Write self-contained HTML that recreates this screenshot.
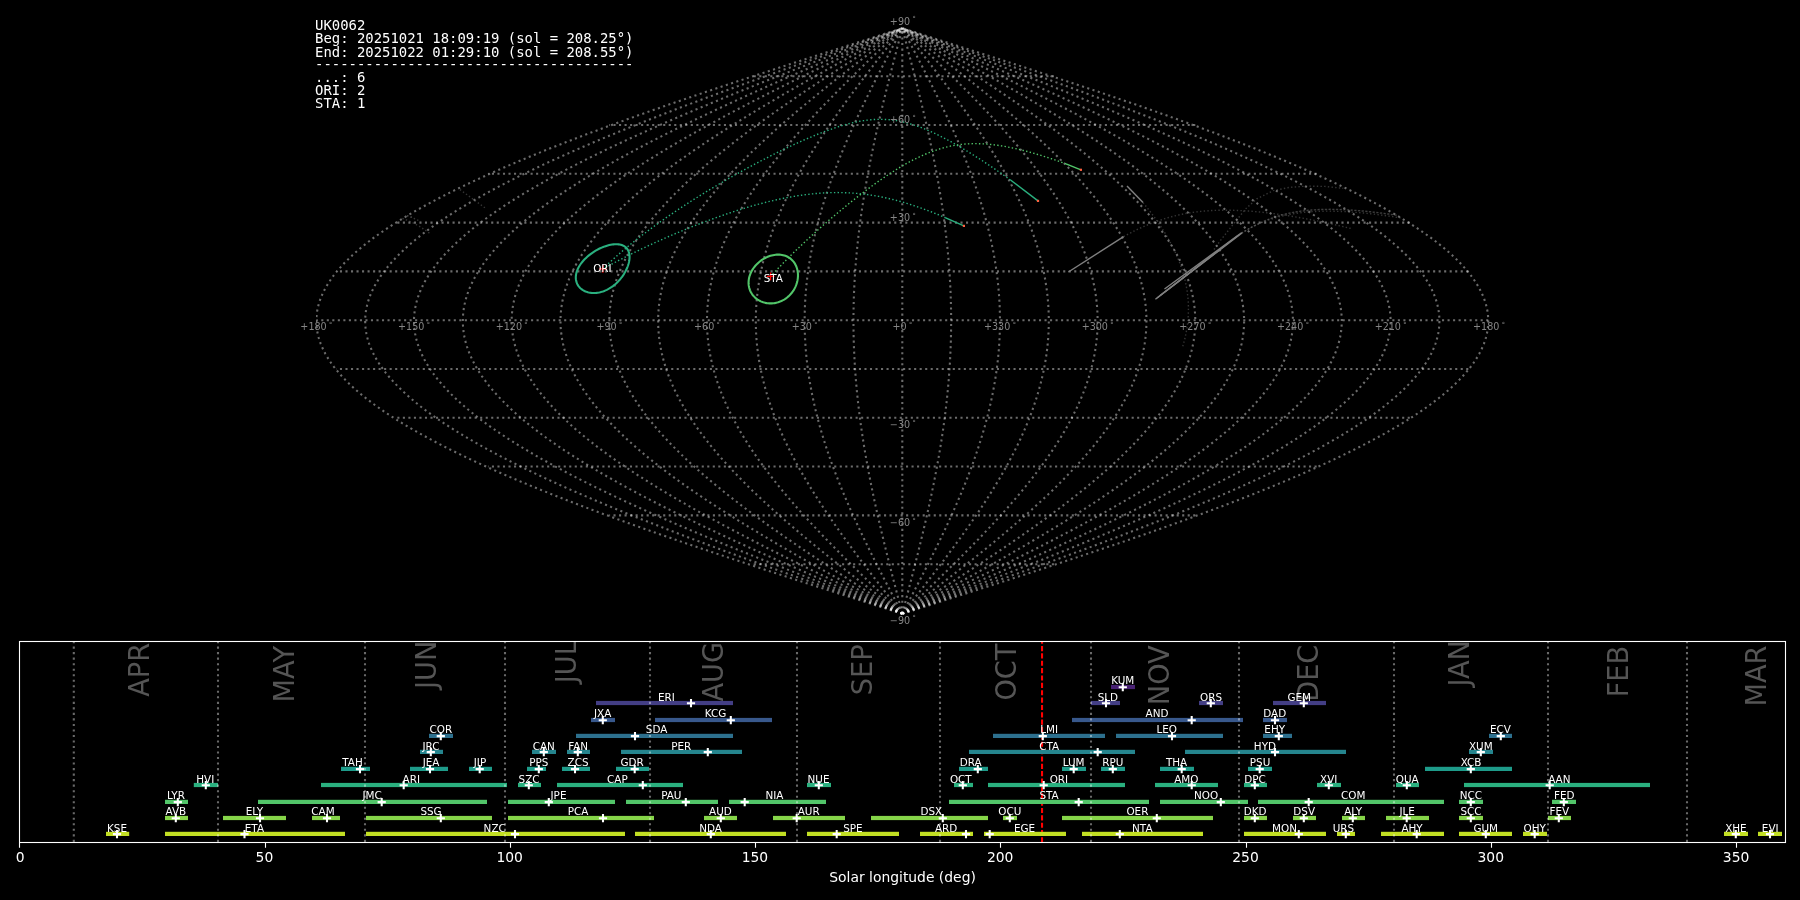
<!DOCTYPE html>
<html lang="en"><head><meta charset="utf-8"><title>UK0062 radiant map</title>
<style>html,body{margin:0;padding:0;background:#000;overflow:hidden}svg text{white-space:pre}</style>
</head><body>
<svg width="1800" height="900" viewBox="0 0 1800 900" style="display:block;background:#000;will-change:transform">
<clipPath id="mapclip"><rect x="316.05" y="0" width="1176" height="640"/></clipPath>
<g fill="none" stroke="#fff" stroke-opacity="0.42" stroke-width="2.083" stroke-dasharray="2.083 3.438" clip-path="url(#mapclip)">
<path d="M1053.96,564.17H750.64"/>
<path d="M1195.29,515.38H609.31"/>
<path d="M1316.64,466.58H487.96"/>
<path d="M1409.77,417.79H394.83"/>
<path d="M1468.31,369.00H336.29"/>
<path d="M1488.27,320.20H316.33"/>
<path d="M1468.31,271.40H336.29"/>
<path d="M1409.77,222.61H394.83"/>
<path d="M1316.64,173.81H487.96"/>
<path d="M1195.29,125.02H609.31"/>
<path d="M1053.96,76.22H750.64"/>
<path d="M902.30,613.77L912.53,610.52L922.75,607.26L932.97,604.01L943.18,600.76L953.37,597.50L963.55,594.25L973.71,591.00L983.85,587.75L993.97,584.49L1004.05,581.24L1014.11,577.99L1024.13,574.73L1034.12,571.48L1044.06,568.23L1053.96,564.97L1063.82,561.72L1073.62,558.47L1083.38,555.22L1093.07,551.96L1102.71,548.71L1112.29,545.46L1121.81,542.20L1131.26,538.95L1140.64,535.70L1149.94,532.44L1159.17,529.19L1168.33,525.94L1177.40,522.69L1186.38,519.43L1195.29,516.18L1204.10,512.93L1212.82,509.67L1221.44,506.42L1229.97,503.17L1238.40,499.92L1246.73,496.66L1254.95,493.41L1263.06,490.16L1271.06,486.90L1278.96,483.65L1286.73,480.40L1294.39,477.14L1301.93,473.89L1309.35,470.64L1316.64,467.38L1323.81,464.13L1330.85,460.88L1337.76,457.63L1344.54,454.37L1351.18,451.12L1357.69,447.87L1364.05,444.61L1370.28,441.36L1376.36,438.11L1382.30,434.86L1388.09,431.60L1393.74,428.35L1399.23,425.10L1404.58,421.84L1409.77,418.59L1414.80,415.34L1419.68,412.08L1424.40,408.83L1428.97,405.58L1433.37,402.32L1437.61,399.07L1441.69,395.82L1445.60,392.57L1449.35,389.31L1452.93,386.06L1456.35,382.81L1459.59,379.55L1462.67,376.30L1465.57,373.05L1468.31,369.80L1470.87,366.54L1473.25,363.29L1475.47,360.04L1477.51,356.78L1479.37,353.53L1481.06,350.28L1482.57,347.02L1483.90,343.77L1485.06,340.52L1486.04,337.26L1486.84,334.01L1487.47,330.76L1487.92,327.51L1488.18,324.25L1488.27,321.00L1488.18,317.75L1487.92,314.49L1487.47,311.24L1486.84,307.99L1486.04,304.74L1485.06,301.48L1483.90,298.23L1482.57,294.98L1481.06,291.72L1479.37,288.47L1477.51,285.22L1475.47,281.96L1473.25,278.71L1470.87,275.46L1468.31,272.20L1465.57,268.95L1462.67,265.70L1459.59,262.45L1456.35,259.19L1452.93,255.94L1449.35,252.69L1445.60,249.43L1441.69,246.18L1437.61,242.93L1433.37,239.68L1428.97,236.42L1424.40,233.17L1419.68,229.92L1414.80,226.66L1409.77,223.41L1404.58,220.16L1399.23,216.90L1393.74,213.65L1388.09,210.40L1382.30,207.14L1376.36,203.89L1370.28,200.64L1364.05,197.39L1357.69,194.13L1351.18,190.88L1344.54,187.63L1337.76,184.37L1330.85,181.12L1323.81,177.87L1316.64,174.62L1309.35,171.36L1301.93,168.11L1294.39,164.86L1286.73,161.60L1278.96,158.35L1271.06,155.10L1263.06,151.84L1254.95,148.59L1246.73,145.34L1238.40,142.08L1229.97,138.83L1221.44,135.58L1212.82,132.33L1204.10,129.07L1195.29,125.82L1186.38,122.57L1177.40,119.31L1168.33,116.06L1159.17,112.81L1149.94,109.55L1140.64,106.30L1131.26,103.05L1121.81,99.80L1112.29,96.54L1102.71,93.29L1093.07,90.04L1083.38,86.78L1073.62,83.53L1063.82,80.28L1053.96,77.02L1044.06,73.77L1034.12,70.52L1024.13,67.27L1014.11,64.01L1004.05,60.76L993.97,57.51L983.85,54.25L973.71,51.00L963.55,47.75L953.37,44.49L943.18,41.24L932.97,37.99L922.75,34.74L912.53,31.48L902.30,28.23"/>
<path d="M902.30,613.77L911.67,610.52L921.05,607.26L930.41,604.01L939.77,600.76L949.11,597.50L958.45,594.25L967.76,591.00L977.06,587.75L986.33,584.49L995.57,581.24L1004.79,577.99L1013.98,574.73L1023.13,571.48L1032.25,568.23L1041.32,564.97L1050.36,561.72L1059.34,558.47L1068.29,555.22L1077.18,551.96L1086.01,548.71L1094.79,545.46L1103.52,542.20L1112.18,538.95L1120.77,535.70L1129.31,532.44L1137.77,529.19L1146.16,525.94L1154.47,522.69L1162.71,519.43L1170.87,516.18L1178.95,512.93L1186.94,509.67L1194.85,506.42L1202.67,503.17L1210.39,499.92L1218.02,496.66L1225.56,493.41L1233.00,490.16L1240.33,486.90L1247.57,483.65L1254.70,480.40L1261.72,477.14L1268.63,473.89L1275.43,470.64L1282.12,467.38L1288.69,464.13L1295.14,460.88L1301.47,457.63L1307.69,454.37L1313.77,451.12L1319.74,447.87L1325.57,444.61L1331.28,441.36L1336.86,438.11L1342.30,434.86L1347.61,431.60L1352.78,428.35L1357.82,425.10L1362.72,421.84L1367.48,418.59L1372.09,415.34L1376.57,412.08L1380.90,408.83L1385.08,405.58L1389.12,402.32L1393.00,399.07L1396.74,395.82L1400.33,392.57L1403.76,389.31L1407.05,386.06L1410.18,382.81L1413.15,379.55L1415.97,376.30L1418.63,373.05L1421.14,369.80L1423.49,366.54L1425.67,363.29L1427.70,360.04L1429.57,356.78L1431.28,353.53L1432.83,350.28L1434.21,347.02L1435.44,343.77L1436.50,340.52L1437.40,337.26L1438.13,334.01L1438.70,330.76L1439.11,327.51L1439.36,324.25L1439.44,321.00L1439.36,317.75L1439.11,314.49L1438.70,311.24L1438.13,307.99L1437.40,304.74L1436.50,301.48L1435.44,298.23L1434.21,294.98L1432.83,291.72L1431.28,288.47L1429.57,285.22L1427.70,281.96L1425.67,278.71L1423.49,275.46L1421.14,272.20L1418.63,268.95L1415.97,265.70L1413.15,262.45L1410.18,259.19L1407.05,255.94L1403.76,252.69L1400.33,249.43L1396.74,246.18L1393.00,242.93L1389.12,239.68L1385.08,236.42L1380.90,233.17L1376.57,229.92L1372.09,226.66L1367.48,223.41L1362.72,220.16L1357.82,216.90L1352.78,213.65L1347.61,210.40L1342.30,207.14L1336.86,203.89L1331.28,200.64L1325.57,197.39L1319.74,194.13L1313.77,190.88L1307.69,187.63L1301.47,184.37L1295.14,181.12L1288.69,177.87L1282.12,174.62L1275.43,171.36L1268.63,168.11L1261.72,164.86L1254.70,161.60L1247.57,158.35L1240.33,155.10L1233.00,151.84L1225.56,148.59L1218.02,145.34L1210.39,142.08L1202.67,138.83L1194.85,135.58L1186.94,132.33L1178.95,129.07L1170.87,125.82L1162.71,122.57L1154.47,119.31L1146.16,116.06L1137.77,112.81L1129.31,109.55L1120.77,106.30L1112.18,103.05L1103.52,99.80L1094.79,96.54L1086.01,93.29L1077.18,90.04L1068.29,86.78L1059.34,83.53L1050.36,80.28L1041.32,77.02L1032.25,73.77L1023.13,70.52L1013.98,67.27L1004.79,64.01L995.57,60.76L986.33,57.51L977.06,54.25L967.76,51.00L958.45,47.75L949.11,44.49L939.77,41.24L930.41,37.99L921.05,34.74L911.67,31.48L902.30,28.23"/>
<path d="M902.30,613.77L910.82,610.52L919.34,607.26L927.86,604.01L936.36,600.76L944.86,597.50L953.34,594.25L961.81,591.00L970.26,587.75L978.69,584.49L987.09,581.24L995.47,577.99L1003.83,574.73L1012.15,571.48L1020.43,568.23L1028.68,564.97L1036.90,561.72L1045.07,558.47L1053.20,555.22L1061.28,551.96L1069.31,548.71L1077.29,545.46L1085.22,542.20L1093.10,538.95L1100.91,535.70L1108.67,532.44L1116.36,529.19L1123.99,525.94L1131.55,522.69L1139.04,519.43L1146.45,516.18L1153.80,512.93L1161.06,509.67L1168.25,506.42L1175.36,503.17L1182.38,499.92L1189.32,496.66L1196.17,493.41L1202.93,490.16L1209.60,486.90L1216.18,483.65L1222.66,480.40L1229.04,477.14L1235.33,473.89L1241.51,470.64L1247.59,467.38L1253.56,464.13L1259.43,460.88L1265.19,457.63L1270.83,454.37L1276.37,451.12L1281.79,447.87L1287.09,444.61L1292.28,441.36L1297.35,438.11L1302.30,434.86L1307.13,431.60L1311.83,428.35L1316.41,425.10L1320.86,421.84L1325.19,418.59L1329.39,415.34L1333.45,412.08L1337.39,408.83L1341.19,405.58L1344.86,402.32L1348.39,399.07L1351.79,395.82L1355.05,392.57L1358.18,389.31L1361.16,386.06L1364.01,382.81L1366.71,379.55L1369.27,376.30L1371.69,373.05L1373.97,369.80L1376.11,366.54L1378.09,363.29L1379.94,360.04L1381.64,356.78L1383.19,353.53L1384.60,350.28L1385.86,347.02L1386.97,343.77L1387.93,340.52L1388.75,337.26L1389.42,334.01L1389.94,330.76L1390.31,327.51L1390.54,324.25L1390.61,321.00L1390.54,317.75L1390.31,314.49L1389.94,311.24L1389.42,307.99L1388.75,304.74L1387.93,301.48L1386.97,298.23L1385.86,294.98L1384.60,291.72L1383.19,288.47L1381.64,285.22L1379.94,281.96L1378.09,278.71L1376.11,275.46L1373.97,272.20L1371.69,268.95L1369.27,265.70L1366.71,262.45L1364.01,259.19L1361.16,255.94L1358.18,252.69L1355.05,249.43L1351.79,246.18L1348.39,242.93L1344.86,239.68L1341.19,236.42L1337.39,233.17L1333.45,229.92L1329.39,226.66L1325.19,223.41L1320.86,220.16L1316.41,216.90L1311.83,213.65L1307.13,210.40L1302.30,207.14L1297.35,203.89L1292.28,200.64L1287.09,197.39L1281.79,194.13L1276.37,190.88L1270.83,187.63L1265.19,184.37L1259.43,181.12L1253.56,177.87L1247.59,174.62L1241.51,171.36L1235.33,168.11L1229.04,164.86L1222.66,161.60L1216.18,158.35L1209.60,155.10L1202.93,151.84L1196.17,148.59L1189.32,145.34L1182.38,142.08L1175.36,138.83L1168.25,135.58L1161.06,132.33L1153.80,129.07L1146.45,125.82L1139.04,122.57L1131.55,119.31L1123.99,116.06L1116.36,112.81L1108.67,109.55L1100.91,106.30L1093.10,103.05L1085.22,99.80L1077.29,96.54L1069.31,93.29L1061.28,90.04L1053.20,86.78L1045.07,83.53L1036.90,80.28L1028.68,77.02L1020.43,73.77L1012.15,70.52L1003.83,67.27L995.47,64.01L987.09,60.76L978.69,57.51L970.26,54.25L961.81,51.00L953.34,47.75L944.86,44.49L936.36,41.24L927.86,37.99L919.34,34.74L910.82,31.48L902.30,28.23"/>
<path d="M902.30,613.77L909.97,610.52L917.64,607.26L925.30,604.01L932.96,600.76L940.60,597.50L948.24,594.25L955.86,591.00L963.46,587.75L971.05,584.49L978.61,581.24L986.16,577.99L993.67,574.73L1001.16,571.48L1008.62,568.23L1016.05,564.97L1023.44,561.72L1030.79,558.47L1038.11,555.22L1045.38,551.96L1052.61,548.71L1059.80,545.46L1066.93,542.20L1074.02,538.95L1081.05,535.70L1088.03,532.44L1094.95,529.19L1101.82,525.94L1108.62,522.69L1115.36,519.43L1122.04,516.18L1128.65,512.93L1135.19,509.67L1141.66,506.42L1148.05,503.17L1154.37,499.92L1160.62,496.66L1166.79,493.41L1172.87,490.16L1178.87,486.90L1184.79,483.65L1190.62,480.40L1196.37,477.14L1202.02,473.89L1207.59,470.64L1213.06,467.38L1218.43,464.13L1223.71,460.88L1228.90,457.63L1233.98,454.37L1238.96,451.12L1243.84,447.87L1248.61,444.61L1253.28,441.36L1257.85,438.11L1262.30,434.86L1266.64,431.60L1270.88,428.35L1275.00,425.10L1279.01,421.84L1282.90,418.59L1286.68,415.34L1290.34,412.08L1293.88,408.83L1297.30,405.58L1300.60,402.32L1303.78,399.07L1306.84,395.82L1309.78,392.57L1312.59,389.31L1315.28,386.06L1317.84,382.81L1320.27,379.55L1322.58,376.30L1324.75,373.05L1326.80,369.80L1328.72,366.54L1330.52,363.29L1332.18,360.04L1333.70,356.78L1335.10,353.53L1336.37,350.28L1337.50,347.02L1338.50,343.77L1339.37,340.52L1340.11,337.26L1340.71,334.01L1341.18,330.76L1341.51,327.51L1341.71,324.25L1341.78,321.00L1341.71,317.75L1341.51,314.49L1341.18,311.24L1340.71,307.99L1340.11,304.74L1339.37,301.48L1338.50,298.23L1337.50,294.98L1336.37,291.72L1335.10,288.47L1333.70,285.22L1332.18,281.96L1330.52,278.71L1328.72,275.46L1326.80,272.20L1324.75,268.95L1322.58,265.70L1320.27,262.45L1317.84,259.19L1315.28,255.94L1312.59,252.69L1309.78,249.43L1306.84,246.18L1303.78,242.93L1300.60,239.68L1297.30,236.42L1293.88,233.17L1290.34,229.92L1286.68,226.66L1282.90,223.41L1279.01,220.16L1275.00,216.90L1270.88,213.65L1266.64,210.40L1262.30,207.14L1257.85,203.89L1253.28,200.64L1248.61,197.39L1243.84,194.13L1238.96,190.88L1233.98,187.63L1228.90,184.37L1223.71,181.12L1218.43,177.87L1213.06,174.62L1207.59,171.36L1202.02,168.11L1196.37,164.86L1190.62,161.60L1184.79,158.35L1178.87,155.10L1172.87,151.84L1166.79,148.59L1160.62,145.34L1154.37,142.08L1148.05,138.83L1141.66,135.58L1135.19,132.33L1128.65,129.07L1122.04,125.82L1115.36,122.57L1108.62,119.31L1101.82,116.06L1094.95,112.81L1088.03,109.55L1081.05,106.30L1074.02,103.05L1066.93,99.80L1059.80,96.54L1052.61,93.29L1045.38,90.04L1038.11,86.78L1030.79,83.53L1023.44,80.28L1016.05,77.02L1008.62,73.77L1001.16,70.52L993.67,67.27L986.16,64.01L978.61,60.76L971.05,57.51L963.46,54.25L955.86,51.00L948.24,47.75L940.60,44.49L932.96,41.24L925.30,37.99L917.64,34.74L909.97,31.48L902.30,28.23"/>
<path d="M902.30,613.77L909.12,610.52L915.93,607.26L922.74,604.01L929.55,600.76L936.35,597.50L943.13,594.25L949.91,591.00L956.67,587.75L963.41,584.49L970.14,581.24L976.84,577.99L983.52,574.73L990.18,571.48L996.81,568.23L1003.41,564.97L1009.98,561.72L1016.51,558.47L1023.02,555.22L1029.48,551.96L1035.91,548.71L1042.30,545.46L1048.64,542.20L1054.94,538.95L1061.19,535.70L1067.39,532.44L1073.55,529.19L1079.65,525.94L1085.70,522.69L1091.69,519.43L1097.62,516.18L1103.50,512.93L1109.31,509.67L1115.06,506.42L1120.75,503.17L1126.37,499.92L1131.92,496.66L1137.40,493.41L1142.81,490.16L1148.14,486.90L1153.40,483.65L1158.59,480.40L1163.69,477.14L1168.72,473.89L1173.67,470.64L1178.53,467.38L1183.31,464.13L1188.00,460.88L1192.61,457.63L1197.13,454.37L1201.55,451.12L1205.89,447.87L1210.13,444.61L1214.29,441.36L1218.34,438.11L1222.30,434.86L1226.16,431.60L1229.92,428.35L1233.59,425.10L1237.15,421.84L1240.61,418.59L1243.97,415.34L1247.22,412.08L1250.37,408.83L1253.41,405.58L1256.35,402.32L1259.17,399.07L1261.89,395.82L1264.50,392.57L1267.00,389.31L1269.39,386.06L1271.66,382.81L1273.83,379.55L1275.88,376.30L1277.81,373.05L1279.64,369.80L1281.34,366.54L1282.94,363.29L1284.41,360.04L1285.77,356.78L1287.01,353.53L1288.14,350.28L1289.15,347.02L1290.04,343.77L1290.81,340.52L1291.46,337.26L1292.00,334.01L1292.41,330.76L1292.71,327.51L1292.89,324.25L1292.95,321.00L1292.89,317.75L1292.71,314.49L1292.41,311.24L1292.00,307.99L1291.46,304.74L1290.81,301.48L1290.04,298.23L1289.15,294.98L1288.14,291.72L1287.01,288.47L1285.77,285.22L1284.41,281.96L1282.94,278.71L1281.34,275.46L1279.64,272.20L1277.81,268.95L1275.88,265.70L1273.83,262.45L1271.66,259.19L1269.39,255.94L1267.00,252.69L1264.50,249.43L1261.89,246.18L1259.17,242.93L1256.35,239.68L1253.41,236.42L1250.37,233.17L1247.22,229.92L1243.97,226.66L1240.61,223.41L1237.15,220.16L1233.59,216.90L1229.92,213.65L1226.16,210.40L1222.30,207.14L1218.34,203.89L1214.29,200.64L1210.13,197.39L1205.89,194.13L1201.55,190.88L1197.13,187.63L1192.61,184.37L1188.00,181.12L1183.31,177.87L1178.53,174.62L1173.67,171.36L1168.72,168.11L1163.69,164.86L1158.59,161.60L1153.40,158.35L1148.14,155.10L1142.81,151.84L1137.40,148.59L1131.92,145.34L1126.37,142.08L1120.75,138.83L1115.06,135.58L1109.31,132.33L1103.50,129.07L1097.62,125.82L1091.69,122.57L1085.70,119.31L1079.65,116.06L1073.55,112.81L1067.39,109.55L1061.19,106.30L1054.94,103.05L1048.64,99.80L1042.30,96.54L1035.91,93.29L1029.48,90.04L1023.02,86.78L1016.51,83.53L1009.98,80.28L1003.41,77.02L996.81,73.77L990.18,70.52L983.52,67.27L976.84,64.01L970.14,60.76L963.41,57.51L956.67,54.25L949.91,51.00L943.13,47.75L936.35,44.49L929.55,41.24L922.74,37.99L915.93,34.74L909.12,31.48L902.30,28.23"/>
<path d="M902.30,613.77L908.27,610.52L914.23,607.26L920.19,604.01L926.14,600.76L932.09,597.50L938.03,594.25L943.96,591.00L949.87,587.75L955.77,584.49L961.66,581.24L967.52,577.99L973.37,574.73L979.19,571.48L984.99,568.23L990.77,564.97L996.52,561.72L1002.24,558.47L1007.93,555.22L1013.58,551.96L1019.21,548.71L1024.80,545.46L1030.35,542.20L1035.86,538.95L1041.33,535.70L1046.76,532.44L1052.14,529.19L1057.48,525.94L1062.77,522.69L1068.02,519.43L1073.21,516.18L1078.35,512.93L1083.44,509.67L1088.47,506.42L1093.44,503.17L1098.36,499.92L1103.21,496.66L1108.01,493.41L1112.74,490.16L1117.41,486.90L1122.02,483.65L1126.55,480.40L1131.02,477.14L1135.42,473.89L1139.75,470.64L1144.00,467.38L1148.18,464.13L1152.29,460.88L1156.32,457.63L1160.27,454.37L1164.15,451.12L1167.94,447.87L1171.66,444.61L1175.29,441.36L1178.84,438.11L1182.30,434.86L1185.68,431.60L1188.97,428.35L1192.18,425.10L1195.29,421.84L1198.32,418.59L1201.26,415.34L1204.11,412.08L1206.86,408.83L1209.52,405.58L1212.09,402.32L1214.57,399.07L1216.94,395.82L1219.23,392.57L1221.41,389.31L1223.50,386.06L1225.49,382.81L1227.39,379.55L1229.18,376.30L1230.88,373.05L1232.47,369.80L1233.96,366.54L1235.36,363.29L1236.65,360.04L1237.84,356.78L1238.92,353.53L1239.91,350.28L1240.79,347.02L1241.57,343.77L1242.24,340.52L1242.82,337.26L1243.28,334.01L1243.65,330.76L1243.91,327.51L1244.06,324.25L1244.12,321.00L1244.06,317.75L1243.91,314.49L1243.65,311.24L1243.28,307.99L1242.82,304.74L1242.24,301.48L1241.57,298.23L1240.79,294.98L1239.91,291.72L1238.92,288.47L1237.84,285.22L1236.65,281.96L1235.36,278.71L1233.96,275.46L1232.47,272.20L1230.88,268.95L1229.18,265.70L1227.39,262.45L1225.49,259.19L1223.50,255.94L1221.41,252.69L1219.23,249.43L1216.94,246.18L1214.57,242.93L1212.09,239.68L1209.52,236.42L1206.86,233.17L1204.11,229.92L1201.26,226.66L1198.32,223.41L1195.29,220.16L1192.18,216.90L1188.97,213.65L1185.68,210.40L1182.30,207.14L1178.84,203.89L1175.29,200.64L1171.66,197.39L1167.94,194.13L1164.15,190.88L1160.27,187.63L1156.32,184.37L1152.29,181.12L1148.18,177.87L1144.00,174.62L1139.75,171.36L1135.42,168.11L1131.02,164.86L1126.55,161.60L1122.02,158.35L1117.41,155.10L1112.74,151.84L1108.01,148.59L1103.21,145.34L1098.36,142.08L1093.44,138.83L1088.47,135.58L1083.44,132.33L1078.35,129.07L1073.21,125.82L1068.02,122.57L1062.77,119.31L1057.48,116.06L1052.14,112.81L1046.76,109.55L1041.33,106.30L1035.86,103.05L1030.35,99.80L1024.80,96.54L1019.21,93.29L1013.58,90.04L1007.93,86.78L1002.24,83.53L996.52,80.28L990.77,77.02L984.99,73.77L979.19,70.52L973.37,67.27L967.52,64.01L961.66,60.76L955.77,57.51L949.87,54.25L943.96,51.00L938.03,47.75L932.09,44.49L926.14,41.24L920.19,37.99L914.23,34.74L908.27,31.48L902.30,28.23"/>
<path d="M902.30,613.77L907.41,610.52L912.53,607.26L917.63,604.01L922.74,600.76L927.84,597.50L932.93,594.25L938.01,591.00L943.08,587.75L948.13,584.49L953.18,581.24L958.20,577.99L963.22,574.73L968.21,571.48L973.18,568.23L978.13,564.97L983.06,561.72L987.96,558.47L992.84,555.22L997.69,551.96L1002.51,548.71L1007.30,545.46L1012.05,542.20L1016.78,538.95L1021.47,535.70L1026.12,532.44L1030.74,529.19L1035.31,525.94L1039.85,522.69L1044.34,519.43L1048.79,516.18L1053.20,512.93L1057.56,509.67L1061.87,506.42L1066.14,503.17L1070.35,499.92L1074.51,496.66L1078.62,493.41L1082.68,490.16L1086.68,486.90L1090.63,483.65L1094.52,480.40L1098.35,477.14L1102.12,473.89L1105.83,470.64L1109.47,467.38L1113.06,464.13L1116.58,460.88L1120.03,457.63L1123.42,454.37L1126.74,451.12L1129.99,447.87L1133.18,444.61L1136.29,441.36L1139.33,438.11L1142.30,434.86L1145.20,431.60L1148.02,428.35L1150.77,425.10L1153.44,421.84L1156.03,418.59L1158.55,415.34L1160.99,412.08L1163.35,408.83L1165.63,405.58L1167.84,402.32L1169.96,399.07L1172.00,395.82L1173.95,392.57L1175.83,389.31L1177.62,386.06L1179.32,382.81L1180.95,379.55L1182.48,376.30L1183.94,373.05L1185.30,369.80L1186.58,366.54L1187.78,363.29L1188.88,360.04L1189.90,356.78L1190.83,353.53L1191.68,350.28L1192.43,347.02L1193.10,343.77L1193.68,340.52L1194.17,337.26L1194.57,334.01L1194.88,330.76L1195.11,327.51L1195.24,324.25L1195.29,321.00L1195.24,317.75L1195.11,314.49L1194.88,311.24L1194.57,307.99L1194.17,304.74L1193.68,301.48L1193.10,298.23L1192.43,294.98L1191.68,291.72L1190.83,288.47L1189.90,285.22L1188.88,281.96L1187.78,278.71L1186.58,275.46L1185.30,272.20L1183.94,268.95L1182.48,265.70L1180.95,262.45L1179.32,259.19L1177.62,255.94L1175.83,252.69L1173.95,249.43L1172.00,246.18L1169.96,242.93L1167.84,239.68L1165.63,236.42L1163.35,233.17L1160.99,229.92L1158.55,226.66L1156.03,223.41L1153.44,220.16L1150.77,216.90L1148.02,213.65L1145.20,210.40L1142.30,207.14L1139.33,203.89L1136.29,200.64L1133.18,197.39L1129.99,194.13L1126.74,190.88L1123.42,187.63L1120.03,184.37L1116.58,181.12L1113.06,177.87L1109.47,174.62L1105.83,171.36L1102.12,168.11L1098.35,164.86L1094.52,161.60L1090.63,158.35L1086.68,155.10L1082.68,151.84L1078.62,148.59L1074.51,145.34L1070.35,142.08L1066.14,138.83L1061.87,135.58L1057.56,132.33L1053.20,129.07L1048.79,125.82L1044.34,122.57L1039.85,119.31L1035.31,116.06L1030.74,112.81L1026.12,109.55L1021.47,106.30L1016.78,103.05L1012.05,99.80L1007.30,96.54L1002.51,93.29L997.69,90.04L992.84,86.78L987.96,83.53L983.06,80.28L978.13,77.02L973.18,73.77L968.21,70.52L963.22,67.27L958.20,64.01L953.18,60.76L948.13,57.51L943.08,54.25L938.01,51.00L932.93,47.75L927.84,44.49L922.74,41.24L917.63,37.99L912.53,34.74L907.41,31.48L902.30,28.23"/>
<path d="M902.30,613.77L906.56,610.52L910.82,607.26L915.08,604.01L919.33,600.76L923.58,597.50L927.82,594.25L932.06,591.00L936.28,587.75L940.49,584.49L944.70,581.24L948.89,577.99L953.06,574.73L957.22,571.48L961.37,568.23L965.49,564.97L969.60,561.72L973.68,558.47L977.75,555.22L981.79,551.96L985.81,548.71L989.80,545.46L993.76,542.20L997.70,538.95L1001.61,535.70L1005.48,532.44L1009.33,529.19L1013.14,525.94L1016.92,522.69L1020.67,519.43L1024.38,516.18L1028.05,512.93L1031.68,509.67L1035.28,506.42L1038.83,503.17L1042.34,499.92L1045.81,496.66L1049.24,493.41L1052.62,490.16L1055.95,486.90L1059.24,483.65L1062.48,480.40L1065.67,477.14L1068.81,473.89L1071.90,470.64L1074.94,467.38L1077.93,464.13L1080.86,460.88L1083.74,457.63L1086.57,454.37L1089.33,451.12L1092.04,447.87L1094.70,444.61L1097.29,441.36L1099.83,438.11L1102.30,434.86L1104.71,431.60L1107.07,428.35L1109.36,425.10L1111.58,421.84L1113.74,418.59L1115.84,415.34L1117.88,412.08L1119.84,408.83L1121.75,405.58L1123.58,402.32L1125.35,399.07L1127.05,395.82L1128.68,392.57L1130.24,389.31L1131.73,386.06L1133.15,382.81L1134.51,379.55L1135.79,376.30L1137.00,373.05L1138.14,369.80L1139.20,366.54L1140.20,363.29L1141.12,360.04L1141.97,356.78L1142.75,353.53L1143.45,350.28L1144.08,347.02L1144.64,343.77L1145.12,340.52L1145.53,337.26L1145.86,334.01L1146.12,330.76L1146.31,327.51L1146.42,324.25L1146.45,321.00L1146.42,317.75L1146.31,314.49L1146.12,311.24L1145.86,307.99L1145.53,304.74L1145.12,301.48L1144.64,298.23L1144.08,294.98L1143.45,291.72L1142.75,288.47L1141.97,285.22L1141.12,281.96L1140.20,278.71L1139.20,275.46L1138.14,272.20L1137.00,268.95L1135.79,265.70L1134.51,262.45L1133.15,259.19L1131.73,255.94L1130.24,252.69L1128.68,249.43L1127.05,246.18L1125.35,242.93L1123.58,239.68L1121.75,236.42L1119.84,233.17L1117.88,229.92L1115.84,226.66L1113.74,223.41L1111.58,220.16L1109.36,216.90L1107.07,213.65L1104.71,210.40L1102.30,207.14L1099.83,203.89L1097.29,200.64L1094.70,197.39L1092.04,194.13L1089.33,190.88L1086.57,187.63L1083.74,184.37L1080.86,181.12L1077.93,177.87L1074.94,174.62L1071.90,171.36L1068.81,168.11L1065.67,164.86L1062.48,161.60L1059.24,158.35L1055.95,155.10L1052.62,151.84L1049.24,148.59L1045.81,145.34L1042.34,142.08L1038.83,138.83L1035.28,135.58L1031.68,132.33L1028.05,129.07L1024.38,125.82L1020.67,122.57L1016.92,119.31L1013.14,116.06L1009.33,112.81L1005.48,109.55L1001.61,106.30L997.70,103.05L993.76,99.80L989.80,96.54L985.81,93.29L981.79,90.04L977.75,86.78L973.68,83.53L969.60,80.28L965.49,77.02L961.37,73.77L957.22,70.52L953.06,67.27L948.89,64.01L944.70,60.76L940.49,57.51L936.28,54.25L932.06,51.00L927.82,47.75L923.58,44.49L919.33,41.24L915.08,37.99L910.82,34.74L906.56,31.48L902.30,28.23"/>
<path d="M902.30,613.77L905.71,610.52L909.12,607.26L912.52,604.01L915.93,600.76L919.32,597.50L922.72,594.25L926.10,591.00L929.48,587.75L932.86,584.49L936.22,581.24L939.57,577.99L942.91,574.73L946.24,571.48L949.55,568.23L952.85,564.97L956.14,561.72L959.41,558.47L962.66,555.22L965.89,551.96L969.10,548.71L972.30,545.46L975.47,542.20L978.62,538.95L981.75,535.70L984.85,532.44L987.92,529.19L990.98,525.94L994.00,522.69L996.99,519.43L999.96,516.18L1002.90,512.93L1005.81,509.67L1008.68,506.42L1011.52,503.17L1014.33,499.92L1017.11,496.66L1019.85,493.41L1022.55,490.16L1025.22,486.90L1027.85,483.65L1030.44,480.40L1033.00,477.14L1035.51,473.89L1037.98,470.64L1040.41,467.38L1042.80,464.13L1045.15,460.88L1047.45,457.63L1049.71,454.37L1051.93,451.12L1054.10,447.87L1056.22,444.61L1058.29,441.36L1060.32,438.11L1062.30,434.86L1064.23,431.60L1066.11,428.35L1067.94,425.10L1069.73,421.84L1071.46,418.59L1073.13,415.34L1074.76,412.08L1076.33,408.83L1077.86,405.58L1079.32,402.32L1080.74,399.07L1082.10,395.82L1083.40,392.57L1084.65,389.31L1085.84,386.06L1086.98,382.81L1088.06,379.55L1089.09,376.30L1090.06,373.05L1090.97,369.80L1091.82,366.54L1092.62,363.29L1093.36,360.04L1094.04,356.78L1094.66,353.53L1095.22,350.28L1095.72,347.02L1096.17,343.77L1096.55,340.52L1096.88,337.26L1097.15,334.01L1097.36,330.76L1097.51,327.51L1097.59,324.25L1097.62,321.00L1097.59,317.75L1097.51,314.49L1097.36,311.24L1097.15,307.99L1096.88,304.74L1096.55,301.48L1096.17,298.23L1095.72,294.98L1095.22,291.72L1094.66,288.47L1094.04,285.22L1093.36,281.96L1092.62,278.71L1091.82,275.46L1090.97,272.20L1090.06,268.95L1089.09,265.70L1088.06,262.45L1086.98,259.19L1085.84,255.94L1084.65,252.69L1083.40,249.43L1082.10,246.18L1080.74,242.93L1079.32,239.68L1077.86,236.42L1076.33,233.17L1074.76,229.92L1073.13,226.66L1071.46,223.41L1069.73,220.16L1067.94,216.90L1066.11,213.65L1064.23,210.40L1062.30,207.14L1060.32,203.89L1058.29,200.64L1056.22,197.39L1054.10,194.13L1051.93,190.88L1049.71,187.63L1047.45,184.37L1045.15,181.12L1042.80,177.87L1040.41,174.62L1037.98,171.36L1035.51,168.11L1033.00,164.86L1030.44,161.60L1027.85,158.35L1025.22,155.10L1022.55,151.84L1019.85,148.59L1017.11,145.34L1014.33,142.08L1011.52,138.83L1008.68,135.58L1005.81,132.33L1002.90,129.07L999.96,125.82L996.99,122.57L994.00,119.31L990.98,116.06L987.92,112.81L984.85,109.55L981.75,106.30L978.62,103.05L975.47,99.80L972.30,96.54L969.10,93.29L965.89,90.04L962.66,86.78L959.41,83.53L956.14,80.28L952.85,77.02L949.55,73.77L946.24,70.52L942.91,67.27L939.57,64.01L936.22,60.76L932.86,57.51L929.48,54.25L926.10,51.00L922.72,47.75L919.32,44.49L915.93,41.24L912.52,37.99L909.12,34.74L905.71,31.48L902.30,28.23"/>
<path d="M902.30,613.77L904.86,610.52L907.41,607.26L909.97,604.01L912.52,600.76L915.07,597.50L917.61,594.25L920.15,591.00L922.69,587.75L925.22,584.49L927.74,581.24L930.25,577.99L932.76,574.73L935.25,571.48L937.74,568.23L940.22,564.97L942.68,561.72L945.13,558.47L947.57,555.22L949.99,551.96L952.40,548.71L954.80,545.46L957.18,542.20L959.54,538.95L961.88,535.70L964.21,532.44L966.52,529.19L968.81,525.94L971.07,522.69L973.32,519.43L975.55,516.18L977.75,512.93L979.93,509.67L982.09,506.42L984.22,503.17L986.32,499.92L988.41,496.66L990.46,493.41L992.49,490.16L994.49,486.90L996.46,483.65L998.41,480.40L1000.32,477.14L1002.21,473.89L1004.06,470.64L1005.89,467.38L1007.68,464.13L1009.44,460.88L1011.17,457.63L1012.86,454.37L1014.52,451.12L1016.15,447.87L1017.74,444.61L1019.29,441.36L1020.82,438.11L1022.30,434.86L1023.75,431.60L1025.16,428.35L1026.53,425.10L1027.87,421.84L1029.17,418.59L1030.43,415.34L1031.65,412.08L1032.83,408.83L1033.97,405.58L1035.07,402.32L1036.13,399.07L1037.15,395.82L1038.13,392.57L1039.06,389.31L1039.96,386.06L1040.81,382.81L1041.62,379.55L1042.39,376.30L1043.12,373.05L1043.80,369.80L1044.44,366.54L1045.04,363.29L1045.59,360.04L1046.10,356.78L1046.57,353.53L1046.99,350.28L1047.37,347.02L1047.70,343.77L1047.99,340.52L1048.24,337.26L1048.44,334.01L1048.59,330.76L1048.70,327.51L1048.77,324.25L1048.79,321.00L1048.77,317.75L1048.70,314.49L1048.59,311.24L1048.44,307.99L1048.24,304.74L1047.99,301.48L1047.70,298.23L1047.37,294.98L1046.99,291.72L1046.57,288.47L1046.10,285.22L1045.59,281.96L1045.04,278.71L1044.44,275.46L1043.80,272.20L1043.12,268.95L1042.39,265.70L1041.62,262.45L1040.81,259.19L1039.96,255.94L1039.06,252.69L1038.13,249.43L1037.15,246.18L1036.13,242.93L1035.07,239.68L1033.97,236.42L1032.83,233.17L1031.65,229.92L1030.43,226.66L1029.17,223.41L1027.87,220.16L1026.53,216.90L1025.16,213.65L1023.75,210.40L1022.30,207.14L1020.82,203.89L1019.29,200.64L1017.74,197.39L1016.15,194.13L1014.52,190.88L1012.86,187.63L1011.17,184.37L1009.44,181.12L1007.68,177.87L1005.89,174.62L1004.06,171.36L1002.21,168.11L1000.32,164.86L998.41,161.60L996.46,158.35L994.49,155.10L992.49,151.84L990.46,148.59L988.41,145.34L986.32,142.08L984.22,138.83L982.09,135.58L979.93,132.33L977.75,129.07L975.55,125.82L973.32,122.57L971.07,119.31L968.81,116.06L966.52,112.81L964.21,109.55L961.88,106.30L959.54,103.05L957.18,99.80L954.80,96.54L952.40,93.29L949.99,90.04L947.57,86.78L945.13,83.53L942.68,80.28L940.22,77.02L937.74,73.77L935.25,70.52L932.76,67.27L930.25,64.01L927.74,60.76L925.22,57.51L922.69,54.25L920.15,51.00L917.61,47.75L915.07,44.49L912.52,41.24L909.97,37.99L907.41,34.74L904.86,31.48L902.30,28.23"/>
<path d="M902.30,613.77L904.00,610.52L905.71,607.26L907.41,604.01L909.11,600.76L910.81,597.50L912.51,594.25L914.20,591.00L915.89,587.75L917.58,584.49L919.26,581.24L920.93,577.99L922.61,574.73L924.27,571.48L925.93,568.23L927.58,564.97L929.22,561.72L930.85,558.47L932.48,555.22L934.10,551.96L935.70,548.71L937.30,545.46L938.88,542.20L940.46,538.95L942.02,535.70L943.57,532.44L945.11,529.19L946.64,525.94L948.15,522.69L949.65,519.43L951.13,516.18L952.60,512.93L954.05,509.67L955.49,506.42L956.91,503.17L958.32,499.92L959.70,496.66L961.07,493.41L962.43,490.16L963.76,486.90L965.08,483.65L966.37,480.40L967.65,477.14L968.91,473.89L970.14,470.64L971.36,467.38L972.55,464.13L973.73,460.88L974.88,457.63L976.01,454.37L977.11,451.12L978.20,447.87L979.26,444.61L980.30,441.36L981.31,438.11L982.30,434.86L983.27,431.60L984.21,428.35L985.12,425.10L986.01,421.84L986.88,418.59L987.72,415.34L988.53,412.08L989.32,408.83L990.08,405.58L990.81,402.32L991.52,399.07L992.20,395.82L992.85,392.57L993.48,389.31L994.07,386.06L994.64,382.81L995.18,379.55L995.69,376.30L996.18,373.05L996.63,369.80L997.06,366.54L997.46,363.29L997.83,360.04L998.17,356.78L998.48,353.53L998.76,350.28L999.01,347.02L999.23,343.77L999.43,340.52L999.59,337.26L999.72,334.01L999.83,330.76L999.90,327.51L999.95,324.25L999.96,321.00L999.95,317.75L999.90,314.49L999.83,311.24L999.72,307.99L999.59,304.74L999.43,301.48L999.23,298.23L999.01,294.98L998.76,291.72L998.48,288.47L998.17,285.22L997.83,281.96L997.46,278.71L997.06,275.46L996.63,272.20L996.18,268.95L995.69,265.70L995.18,262.45L994.64,259.19L994.07,255.94L993.48,252.69L992.85,249.43L992.20,246.18L991.52,242.93L990.81,239.68L990.08,236.42L989.32,233.17L988.53,229.92L987.72,226.66L986.88,223.41L986.01,220.16L985.12,216.90L984.21,213.65L983.27,210.40L982.30,207.14L981.31,203.89L980.30,200.64L979.26,197.39L978.20,194.13L977.11,190.88L976.01,187.63L974.88,184.37L973.73,181.12L972.55,177.87L971.36,174.62L970.14,171.36L968.91,168.11L967.65,164.86L966.37,161.60L965.08,158.35L963.76,155.10L962.43,151.84L961.07,148.59L959.70,145.34L958.32,142.08L956.91,138.83L955.49,135.58L954.05,132.33L952.60,129.07L951.13,125.82L949.65,122.57L948.15,119.31L946.64,116.06L945.11,112.81L943.57,109.55L942.02,106.30L940.46,103.05L938.88,99.80L937.30,96.54L935.70,93.29L934.10,90.04L932.48,86.78L930.85,83.53L929.22,80.28L927.58,77.02L925.93,73.77L924.27,70.52L922.61,67.27L920.93,64.01L919.26,60.76L917.58,57.51L915.89,54.25L914.20,51.00L912.51,47.75L910.81,44.49L909.11,41.24L907.41,37.99L905.71,34.74L904.00,31.48L902.30,28.23"/>
<path d="M902.30,613.77L903.15,610.52L904.00,607.26L904.86,604.01L905.71,600.76L906.56,597.50L907.40,594.25L908.25,591.00L909.10,587.75L909.94,584.49L910.78,581.24L911.62,577.99L912.45,574.73L913.28,571.48L914.11,568.23L914.94,564.97L915.76,561.72L916.58,558.47L917.39,555.22L918.20,551.96L919.00,548.71L919.80,545.46L920.59,542.20L921.38,538.95L922.16,535.70L922.94,532.44L923.71,529.19L924.47,525.94L925.22,522.69L925.97,519.43L926.72,516.18L927.45,512.93L928.18,509.67L928.90,506.42L929.61,503.17L930.31,499.92L931.00,496.66L931.69,493.41L932.36,490.16L933.03,486.90L933.69,483.65L934.34,480.40L934.97,477.14L935.60,473.89L936.22,470.64L936.83,467.38L937.43,464.13L938.01,460.88L938.59,457.63L939.15,454.37L939.71,451.12L940.25,447.87L940.78,444.61L941.30,441.36L941.81,438.11L942.30,434.86L942.78,431.60L943.25,428.35L943.71,425.10L944.16,421.84L944.59,418.59L945.01,415.34L945.42,412.08L945.81,408.83L946.19,405.58L946.56,402.32L946.91,399.07L947.25,395.82L947.58,392.57L947.89,389.31L948.19,386.06L948.47,382.81L948.74,379.55L949.00,376.30L949.24,373.05L949.47,369.80L949.68,366.54L949.88,363.29L950.06,360.04L950.23,356.78L950.39,353.53L950.53,350.28L950.66,347.02L950.77,343.77L950.86,340.52L950.95,337.26L951.01,334.01L951.06,330.76L951.10,327.51L951.12,324.25L951.13,321.00L951.12,317.75L951.10,314.49L951.06,311.24L951.01,307.99L950.95,304.74L950.86,301.48L950.77,298.23L950.66,294.98L950.53,291.72L950.39,288.47L950.23,285.22L950.06,281.96L949.88,278.71L949.68,275.46L949.47,272.20L949.24,268.95L949.00,265.70L948.74,262.45L948.47,259.19L948.19,255.94L947.89,252.69L947.58,249.43L947.25,246.18L946.91,242.93L946.56,239.68L946.19,236.42L945.81,233.17L945.42,229.92L945.01,226.66L944.59,223.41L944.16,220.16L943.71,216.90L943.25,213.65L942.78,210.40L942.30,207.14L941.81,203.89L941.30,200.64L940.78,197.39L940.25,194.13L939.71,190.88L939.15,187.63L938.59,184.37L938.01,181.12L937.43,177.87L936.83,174.62L936.22,171.36L935.60,168.11L934.97,164.86L934.34,161.60L933.69,158.35L933.03,155.10L932.36,151.84L931.69,148.59L931.00,145.34L930.31,142.08L929.61,138.83L928.90,135.58L928.18,132.33L927.45,129.07L926.72,125.82L925.97,122.57L925.22,119.31L924.47,116.06L923.71,112.81L922.94,109.55L922.16,106.30L921.38,103.05L920.59,99.80L919.80,96.54L919.00,93.29L918.20,90.04L917.39,86.78L916.58,83.53L915.76,80.28L914.94,77.02L914.11,73.77L913.28,70.52L912.45,67.27L911.62,64.01L910.78,60.76L909.94,57.51L909.10,54.25L908.25,51.00L907.40,47.75L906.56,44.49L905.71,41.24L904.86,37.99L904.00,34.74L903.15,31.48L902.30,28.23"/>
<path d="M902.30,613.77L902.30,610.52L902.30,607.26L902.30,604.01L902.30,600.76L902.30,597.50L902.30,594.25L902.30,591.00L902.30,587.75L902.30,584.49L902.30,581.24L902.30,577.99L902.30,574.73L902.30,571.48L902.30,568.23L902.30,564.97L902.30,561.72L902.30,558.47L902.30,555.22L902.30,551.96L902.30,548.71L902.30,545.46L902.30,542.20L902.30,538.95L902.30,535.70L902.30,532.44L902.30,529.19L902.30,525.94L902.30,522.69L902.30,519.43L902.30,516.18L902.30,512.93L902.30,509.67L902.30,506.42L902.30,503.17L902.30,499.92L902.30,496.66L902.30,493.41L902.30,490.16L902.30,486.90L902.30,483.65L902.30,480.40L902.30,477.14L902.30,473.89L902.30,470.64L902.30,467.38L902.30,464.13L902.30,460.88L902.30,457.63L902.30,454.37L902.30,451.12L902.30,447.87L902.30,444.61L902.30,441.36L902.30,438.11L902.30,434.86L902.30,431.60L902.30,428.35L902.30,425.10L902.30,421.84L902.30,418.59L902.30,415.34L902.30,412.08L902.30,408.83L902.30,405.58L902.30,402.32L902.30,399.07L902.30,395.82L902.30,392.57L902.30,389.31L902.30,386.06L902.30,382.81L902.30,379.55L902.30,376.30L902.30,373.05L902.30,369.80L902.30,366.54L902.30,363.29L902.30,360.04L902.30,356.78L902.30,353.53L902.30,350.28L902.30,347.02L902.30,343.77L902.30,340.52L902.30,337.26L902.30,334.01L902.30,330.76L902.30,327.51L902.30,324.25L902.30,321.00L902.30,317.75L902.30,314.49L902.30,311.24L902.30,307.99L902.30,304.74L902.30,301.48L902.30,298.23L902.30,294.98L902.30,291.72L902.30,288.47L902.30,285.22L902.30,281.96L902.30,278.71L902.30,275.46L902.30,272.20L902.30,268.95L902.30,265.70L902.30,262.45L902.30,259.19L902.30,255.94L902.30,252.69L902.30,249.43L902.30,246.18L902.30,242.93L902.30,239.68L902.30,236.42L902.30,233.17L902.30,229.92L902.30,226.66L902.30,223.41L902.30,220.16L902.30,216.90L902.30,213.65L902.30,210.40L902.30,207.14L902.30,203.89L902.30,200.64L902.30,197.39L902.30,194.13L902.30,190.88L902.30,187.63L902.30,184.37L902.30,181.12L902.30,177.87L902.30,174.62L902.30,171.36L902.30,168.11L902.30,164.86L902.30,161.60L902.30,158.35L902.30,155.10L902.30,151.84L902.30,148.59L902.30,145.34L902.30,142.08L902.30,138.83L902.30,135.58L902.30,132.33L902.30,129.07L902.30,125.82L902.30,122.57L902.30,119.31L902.30,116.06L902.30,112.81L902.30,109.55L902.30,106.30L902.30,103.05L902.30,99.80L902.30,96.54L902.30,93.29L902.30,90.04L902.30,86.78L902.30,83.53L902.30,80.28L902.30,77.02L902.30,73.77L902.30,70.52L902.30,67.27L902.30,64.01L902.30,60.76L902.30,57.51L902.30,54.25L902.30,51.00L902.30,47.75L902.30,44.49L902.30,41.24L902.30,37.99L902.30,34.74L902.30,31.48L902.30,28.23"/>
<path d="M902.30,613.77L901.45,610.52L900.60,607.26L899.74,604.01L898.89,600.76L898.04,597.50L897.20,594.25L896.35,591.00L895.50,587.75L894.66,584.49L893.82,581.24L892.98,577.99L892.15,574.73L891.32,571.48L890.49,568.23L889.66,564.97L888.84,561.72L888.02,558.47L887.21,555.22L886.40,551.96L885.60,548.71L884.80,545.46L884.01,542.20L883.22,538.95L882.44,535.70L881.66,532.44L880.89,529.19L880.13,525.94L879.38,522.69L878.63,519.43L877.88,516.18L877.15,512.93L876.42,509.67L875.70,506.42L874.99,503.17L874.29,499.92L873.60,496.66L872.91,493.41L872.24,490.16L871.57,486.90L870.91,483.65L870.26,480.40L869.63,477.14L869.00,473.89L868.38,470.64L867.77,467.38L867.17,464.13L866.59,460.88L866.01,457.63L865.45,454.37L864.89,451.12L864.35,447.87L863.82,444.61L863.30,441.36L862.79,438.11L862.30,434.86L861.82,431.60L861.35,428.35L860.89,425.10L860.44,421.84L860.01,418.59L859.59,415.34L859.18,412.08L858.79,408.83L858.41,405.58L858.04,402.32L857.69,399.07L857.35,395.82L857.02,392.57L856.71,389.31L856.41,386.06L856.13,382.81L855.86,379.55L855.60,376.30L855.36,373.05L855.13,369.80L854.92,366.54L854.72,363.29L854.54,360.04L854.37,356.78L854.21,353.53L854.07,350.28L853.94,347.02L853.83,343.77L853.74,340.52L853.65,337.26L853.59,334.01L853.54,330.76L853.50,327.51L853.48,324.25L853.47,321.00L853.48,317.75L853.50,314.49L853.54,311.24L853.59,307.99L853.65,304.74L853.74,301.48L853.83,298.23L853.94,294.98L854.07,291.72L854.21,288.47L854.37,285.22L854.54,281.96L854.72,278.71L854.92,275.46L855.13,272.20L855.36,268.95L855.60,265.70L855.86,262.45L856.13,259.19L856.41,255.94L856.71,252.69L857.02,249.43L857.35,246.18L857.69,242.93L858.04,239.68L858.41,236.42L858.79,233.17L859.18,229.92L859.59,226.66L860.01,223.41L860.44,220.16L860.89,216.90L861.35,213.65L861.82,210.40L862.30,207.14L862.79,203.89L863.30,200.64L863.82,197.39L864.35,194.13L864.89,190.88L865.45,187.63L866.01,184.37L866.59,181.12L867.17,177.87L867.77,174.62L868.38,171.36L869.00,168.11L869.63,164.86L870.26,161.60L870.91,158.35L871.57,155.10L872.24,151.84L872.91,148.59L873.60,145.34L874.29,142.08L874.99,138.83L875.70,135.58L876.42,132.33L877.15,129.07L877.88,125.82L878.63,122.57L879.38,119.31L880.13,116.06L880.89,112.81L881.66,109.55L882.44,106.30L883.22,103.05L884.01,99.80L884.80,96.54L885.60,93.29L886.40,90.04L887.21,86.78L888.02,83.53L888.84,80.28L889.66,77.02L890.49,73.77L891.32,70.52L892.15,67.27L892.98,64.01L893.82,60.76L894.66,57.51L895.50,54.25L896.35,51.00L897.20,47.75L898.04,44.49L898.89,41.24L899.74,37.99L900.60,34.74L901.45,31.48L902.30,28.23"/>
<path d="M902.30,613.77L900.60,610.52L898.89,607.26L897.19,604.01L895.49,600.76L893.79,597.50L892.09,594.25L890.40,591.00L888.71,587.75L887.02,584.49L885.34,581.24L883.67,577.99L881.99,574.73L880.33,571.48L878.67,568.23L877.02,564.97L875.38,561.72L873.75,558.47L872.12,555.22L870.50,551.96L868.90,548.71L867.30,545.46L865.72,542.20L864.14,538.95L862.58,535.70L861.03,532.44L859.49,529.19L857.96,525.94L856.45,522.69L854.95,519.43L853.47,516.18L852.00,512.93L850.55,509.67L849.11,506.42L847.69,503.17L846.28,499.92L844.90,496.66L843.53,493.41L842.17,490.16L840.84,486.90L839.52,483.65L838.23,480.40L836.95,477.14L835.69,473.89L834.46,470.64L833.24,467.38L832.05,464.13L830.87,460.88L829.72,457.63L828.59,454.37L827.49,451.12L826.40,447.87L825.34,444.61L824.30,441.36L823.29,438.11L822.30,434.86L821.33,431.60L820.39,428.35L819.48,425.10L818.59,421.84L817.72,418.59L816.88,415.34L816.07,412.08L815.28,408.83L814.52,405.58L813.79,402.32L813.08,399.07L812.40,395.82L811.75,392.57L811.12,389.31L810.53,386.06L809.96,382.81L809.42,379.55L808.91,376.30L808.42,373.05L807.97,369.80L807.54,366.54L807.14,363.29L806.77,360.04L806.43,356.78L806.12,353.53L805.84,350.28L805.59,347.02L805.37,343.77L805.17,340.52L805.01,337.26L804.88,334.01L804.77,330.76L804.70,327.51L804.65,324.25L804.64,321.00L804.65,317.75L804.70,314.49L804.77,311.24L804.88,307.99L805.01,304.74L805.17,301.48L805.37,298.23L805.59,294.98L805.84,291.72L806.12,288.47L806.43,285.22L806.77,281.96L807.14,278.71L807.54,275.46L807.97,272.20L808.42,268.95L808.91,265.70L809.42,262.45L809.96,259.19L810.53,255.94L811.12,252.69L811.75,249.43L812.40,246.18L813.08,242.93L813.79,239.68L814.52,236.42L815.28,233.17L816.07,229.92L816.88,226.66L817.72,223.41L818.59,220.16L819.48,216.90L820.39,213.65L821.33,210.40L822.30,207.14L823.29,203.89L824.30,200.64L825.34,197.39L826.40,194.13L827.49,190.88L828.59,187.63L829.72,184.37L830.87,181.12L832.05,177.87L833.24,174.62L834.46,171.36L835.69,168.11L836.95,164.86L838.23,161.60L839.52,158.35L840.84,155.10L842.17,151.84L843.53,148.59L844.90,145.34L846.28,142.08L847.69,138.83L849.11,135.58L850.55,132.33L852.00,129.07L853.47,125.82L854.95,122.57L856.45,119.31L857.96,116.06L859.49,112.81L861.03,109.55L862.58,106.30L864.14,103.05L865.72,99.80L867.30,96.54L868.90,93.29L870.50,90.04L872.12,86.78L873.75,83.53L875.38,80.28L877.02,77.02L878.67,73.77L880.33,70.52L881.99,67.27L883.67,64.01L885.34,60.76L887.02,57.51L888.71,54.25L890.40,51.00L892.09,47.75L893.79,44.49L895.49,41.24L897.19,37.99L898.89,34.74L900.60,31.48L902.30,28.23"/>
<path d="M902.30,613.77L899.74,610.52L897.19,607.26L894.63,604.01L892.08,600.76L889.53,597.50L886.99,594.25L884.45,591.00L881.91,587.75L879.38,584.49L876.86,581.24L874.35,577.99L871.84,574.73L869.35,571.48L866.86,568.23L864.38,564.97L861.92,561.72L859.47,558.47L857.03,555.22L854.61,551.96L852.20,548.71L849.80,545.46L847.42,542.20L845.06,538.95L842.72,535.70L840.39,532.44L838.08,529.19L835.79,525.94L833.53,522.69L831.28,519.43L829.05,516.18L826.85,512.93L824.67,509.67L822.51,506.42L820.38,503.17L818.28,499.92L816.19,496.66L814.14,493.41L812.11,490.16L810.11,486.90L808.14,483.65L806.19,480.40L804.28,477.14L802.39,473.89L800.54,470.64L798.71,467.38L796.92,464.13L795.16,460.88L793.43,457.63L791.74,454.37L790.08,451.12L788.45,447.87L786.86,444.61L785.31,441.36L783.78,438.11L782.30,434.86L780.85,431.60L779.44,428.35L778.07,425.10L776.73,421.84L775.43,418.59L774.17,415.34L772.95,412.08L771.77,408.83L770.63,405.58L769.53,402.32L768.47,399.07L767.45,395.82L766.47,392.57L765.54,389.31L764.64,386.06L763.79,382.81L762.98,379.55L762.21,376.30L761.48,373.05L760.80,369.80L760.16,366.54L759.56,363.29L759.01,360.04L758.50,356.78L758.03,353.53L757.61,350.28L757.23,347.02L756.90,343.77L756.61,340.52L756.36,337.26L756.16,334.01L756.01,330.76L755.90,327.51L755.83,324.25L755.81,321.00L755.83,317.75L755.90,314.49L756.01,311.24L756.16,307.99L756.36,304.74L756.61,301.48L756.90,298.23L757.23,294.98L757.61,291.72L758.03,288.47L758.50,285.22L759.01,281.96L759.56,278.71L760.16,275.46L760.80,272.20L761.48,268.95L762.21,265.70L762.98,262.45L763.79,259.19L764.64,255.94L765.54,252.69L766.47,249.43L767.45,246.18L768.47,242.93L769.53,239.68L770.63,236.42L771.77,233.17L772.95,229.92L774.17,226.66L775.43,223.41L776.73,220.16L778.07,216.90L779.44,213.65L780.85,210.40L782.30,207.14L783.78,203.89L785.31,200.64L786.86,197.39L788.45,194.13L790.08,190.88L791.74,187.63L793.43,184.37L795.16,181.12L796.92,177.87L798.71,174.62L800.54,171.36L802.39,168.11L804.28,164.86L806.19,161.60L808.14,158.35L810.11,155.10L812.11,151.84L814.14,148.59L816.19,145.34L818.28,142.08L820.38,138.83L822.51,135.58L824.67,132.33L826.85,129.07L829.05,125.82L831.28,122.57L833.53,119.31L835.79,116.06L838.08,112.81L840.39,109.55L842.72,106.30L845.06,103.05L847.42,99.80L849.80,96.54L852.20,93.29L854.61,90.04L857.03,86.78L859.47,83.53L861.92,80.28L864.38,77.02L866.86,73.77L869.35,70.52L871.84,67.27L874.35,64.01L876.86,60.76L879.38,57.51L881.91,54.25L884.45,51.00L886.99,47.75L889.53,44.49L892.08,41.24L894.63,37.99L897.19,34.74L899.74,31.48L902.30,28.23"/>
<path d="M902.30,613.77L898.89,610.52L895.48,607.26L892.08,604.01L888.67,600.76L885.28,597.50L881.88,594.25L878.50,591.00L875.12,587.75L871.74,584.49L868.38,581.24L865.03,577.99L861.69,574.73L858.36,571.48L855.05,568.23L851.75,564.97L848.46,561.72L845.19,558.47L841.94,555.22L838.71,551.96L835.50,548.71L832.30,545.46L829.13,542.20L825.98,538.95L822.85,535.70L819.75,532.44L816.68,529.19L813.62,525.94L810.60,522.69L807.61,519.43L804.64,516.18L801.70,512.93L798.79,509.67L795.92,506.42L793.08,503.17L790.27,499.92L787.49,496.66L784.75,493.41L782.05,490.16L779.38,486.90L776.75,483.65L774.16,480.40L771.60,477.14L769.09,473.89L766.62,470.64L764.19,467.38L761.80,464.13L759.45,460.88L757.15,457.63L754.89,454.37L752.67,451.12L750.50,447.87L748.38,444.61L746.31,441.36L744.28,438.11L742.30,434.86L740.37,431.60L738.49,428.35L736.66,425.10L734.87,421.84L733.14,418.59L731.47,415.34L729.84,412.08L728.27,408.83L726.74,405.58L725.28,402.32L723.86,399.07L722.50,395.82L721.20,392.57L719.95,389.31L718.76,386.06L717.62,382.81L716.54,379.55L715.51,376.30L714.54,373.05L713.63,369.80L712.78,366.54L711.98,363.29L711.24,360.04L710.56,356.78L709.94,353.53L709.38,350.28L708.88,347.02L708.43,343.77L708.05,340.52L707.72,337.26L707.45,334.01L707.24,330.76L707.09,327.51L707.01,324.25L706.98,321.00L707.01,317.75L707.09,314.49L707.24,311.24L707.45,307.99L707.72,304.74L708.05,301.48L708.43,298.23L708.88,294.98L709.38,291.72L709.94,288.47L710.56,285.22L711.24,281.96L711.98,278.71L712.78,275.46L713.63,272.20L714.54,268.95L715.51,265.70L716.54,262.45L717.62,259.19L718.76,255.94L719.95,252.69L721.20,249.43L722.50,246.18L723.86,242.93L725.28,239.68L726.74,236.42L728.27,233.17L729.84,229.92L731.47,226.66L733.14,223.41L734.87,220.16L736.66,216.90L738.49,213.65L740.37,210.40L742.30,207.14L744.28,203.89L746.31,200.64L748.38,197.39L750.50,194.13L752.67,190.88L754.89,187.63L757.15,184.37L759.45,181.12L761.80,177.87L764.19,174.62L766.62,171.36L769.09,168.11L771.60,164.86L774.16,161.60L776.75,158.35L779.38,155.10L782.05,151.84L784.75,148.59L787.49,145.34L790.27,142.08L793.08,138.83L795.92,135.58L798.79,132.33L801.70,129.07L804.64,125.82L807.61,122.57L810.60,119.31L813.62,116.06L816.68,112.81L819.75,109.55L822.85,106.30L825.98,103.05L829.13,99.80L832.30,96.54L835.50,93.29L838.71,90.04L841.94,86.78L845.19,83.53L848.46,80.28L851.75,77.02L855.05,73.77L858.36,70.52L861.69,67.27L865.03,64.01L868.38,60.76L871.74,57.51L875.12,54.25L878.50,51.00L881.88,47.75L885.28,44.49L888.67,41.24L892.08,37.99L895.48,34.74L898.89,31.48L902.30,28.23"/>
<path d="M902.30,613.77L898.04,610.52L893.78,607.26L889.52,604.01L885.27,600.76L881.02,597.50L876.78,594.25L872.54,591.00L868.32,587.75L864.11,584.49L859.90,581.24L855.71,577.99L851.54,574.73L847.38,571.48L843.23,568.23L839.11,564.97L835.00,561.72L830.92,558.47L826.85,555.22L822.81,551.96L818.79,548.71L814.80,545.46L810.84,542.20L806.90,538.95L802.99,535.70L799.12,532.44L795.27,529.19L791.46,525.94L787.68,522.69L783.93,519.43L780.22,516.18L776.55,512.93L772.92,509.67L769.32,506.42L765.77,503.17L762.26,499.92L758.79,496.66L755.36,493.41L751.98,490.16L748.65,486.90L745.36,483.65L742.12,480.40L738.93,477.14L735.79,473.89L732.70,470.64L729.66,467.38L726.67,464.13L723.74,460.88L720.86,457.63L718.03,454.37L715.27,451.12L712.56,447.87L709.90,444.61L707.31,441.36L704.77,438.11L702.30,434.86L699.89,431.60L697.53,428.35L695.24,425.10L693.02,421.84L690.86,418.59L688.76,415.34L686.72,412.08L684.76,408.83L682.85,405.58L681.02,402.32L679.25,399.07L677.55,395.82L675.92,392.57L674.36,389.31L672.87,386.06L671.45,382.81L670.09,379.55L668.81,376.30L667.60,373.05L666.46,369.80L665.40,366.54L664.40,363.29L663.48,360.04L662.63,356.78L661.85,353.53L661.15,350.28L660.52,347.02L659.96,343.77L659.48,340.52L659.07,337.26L658.74,334.01L658.48,330.76L658.29,327.51L658.18,324.25L658.14,321.00L658.18,317.75L658.29,314.49L658.48,311.24L658.74,307.99L659.07,304.74L659.48,301.48L659.96,298.23L660.52,294.98L661.15,291.72L661.85,288.47L662.63,285.22L663.48,281.96L664.40,278.71L665.40,275.46L666.46,272.20L667.60,268.95L668.81,265.70L670.09,262.45L671.45,259.19L672.87,255.94L674.36,252.69L675.92,249.43L677.55,246.18L679.25,242.93L681.02,239.68L682.85,236.42L684.76,233.17L686.72,229.92L688.76,226.66L690.86,223.41L693.02,220.16L695.24,216.90L697.53,213.65L699.89,210.40L702.30,207.14L704.77,203.89L707.31,200.64L709.90,197.39L712.56,194.13L715.27,190.88L718.03,187.63L720.86,184.37L723.74,181.12L726.67,177.87L729.66,174.62L732.70,171.36L735.79,168.11L738.93,164.86L742.12,161.60L745.36,158.35L748.65,155.10L751.98,151.84L755.36,148.59L758.79,145.34L762.26,142.08L765.77,138.83L769.32,135.58L772.92,132.33L776.55,129.07L780.22,125.82L783.93,122.57L787.68,119.31L791.46,116.06L795.27,112.81L799.12,109.55L802.99,106.30L806.90,103.05L810.84,99.80L814.80,96.54L818.79,93.29L822.81,90.04L826.85,86.78L830.92,83.53L835.00,80.28L839.11,77.02L843.23,73.77L847.38,70.52L851.54,67.27L855.71,64.01L859.90,60.76L864.11,57.51L868.32,54.25L872.54,51.00L876.78,47.75L881.02,44.49L885.27,41.24L889.52,37.99L893.78,34.74L898.04,31.48L902.30,28.23"/>
<path d="M902.30,613.77L897.19,610.52L892.07,607.26L886.97,604.01L881.86,600.76L876.76,597.50L871.67,594.25L866.59,591.00L861.52,587.75L856.47,584.49L851.42,581.24L846.40,577.99L841.38,574.73L836.39,571.48L831.42,568.23L826.47,564.97L821.54,561.72L816.64,558.47L811.76,555.22L806.91,551.96L802.09,548.71L797.30,545.46L792.55,542.20L787.82,538.95L783.13,535.70L778.48,532.44L773.86,529.19L769.29,525.94L764.75,522.69L760.26,519.43L755.81,516.18L751.40,512.93L747.04,509.67L742.73,506.42L738.46,503.17L734.25,499.92L730.09,496.66L725.98,493.41L721.92,490.16L717.92,486.90L713.97,483.65L710.08,480.40L706.25,477.14L702.48,473.89L698.77,470.64L695.13,467.38L691.54,464.13L688.02,460.88L684.57,457.63L681.18,454.37L677.86,451.12L674.61,447.87L671.42,444.61L668.31,441.36L665.27,438.11L662.30,434.86L659.40,431.60L656.58,428.35L653.83,425.10L651.16,421.84L648.57,418.59L646.05,415.34L643.61,412.08L641.25,408.83L638.97,405.58L636.76,402.32L634.64,399.07L632.60,395.82L630.65,392.57L628.77,389.31L626.98,386.06L625.28,382.81L623.65,379.55L622.12,376.30L620.66,373.05L619.30,369.80L618.02,366.54L616.82,363.29L615.72,360.04L614.70,356.78L613.77,353.53L612.92,350.28L612.17,347.02L611.50,343.77L610.92,340.52L610.43,337.26L610.03,334.01L609.72,330.76L609.49,327.51L609.36,324.25L609.31,321.00L609.36,317.75L609.49,314.49L609.72,311.24L610.03,307.99L610.43,304.74L610.92,301.48L611.50,298.23L612.17,294.98L612.92,291.72L613.77,288.47L614.70,285.22L615.72,281.96L616.82,278.71L618.02,275.46L619.30,272.20L620.66,268.95L622.12,265.70L623.65,262.45L625.28,259.19L626.98,255.94L628.77,252.69L630.65,249.43L632.60,246.18L634.64,242.93L636.76,239.68L638.97,236.42L641.25,233.17L643.61,229.92L646.05,226.66L648.57,223.41L651.16,220.16L653.83,216.90L656.58,213.65L659.40,210.40L662.30,207.14L665.27,203.89L668.31,200.64L671.42,197.39L674.61,194.13L677.86,190.88L681.18,187.63L684.57,184.37L688.02,181.12L691.54,177.87L695.13,174.62L698.77,171.36L702.48,168.11L706.25,164.86L710.08,161.60L713.97,158.35L717.92,155.10L721.92,151.84L725.98,148.59L730.09,145.34L734.25,142.08L738.46,138.83L742.73,135.58L747.04,132.33L751.40,129.07L755.81,125.82L760.26,122.57L764.75,119.31L769.29,116.06L773.86,112.81L778.48,109.55L783.13,106.30L787.82,103.05L792.55,99.80L797.30,96.54L802.09,93.29L806.91,90.04L811.76,86.78L816.64,83.53L821.54,80.28L826.47,77.02L831.42,73.77L836.39,70.52L841.38,67.27L846.40,64.01L851.42,60.76L856.47,57.51L861.52,54.25L866.59,51.00L871.67,47.75L876.76,44.49L881.86,41.24L886.97,37.99L892.07,34.74L897.19,31.48L902.30,28.23"/>
<path d="M902.30,613.77L896.33,610.52L890.37,607.26L884.41,604.01L878.46,600.76L872.51,597.50L866.57,594.25L860.64,591.00L854.73,587.75L848.83,584.49L842.94,581.24L837.08,577.99L831.23,574.73L825.41,571.48L819.61,568.23L813.83,564.97L808.08,561.72L802.36,558.47L796.67,555.22L791.02,551.96L785.39,548.71L779.80,545.46L774.25,542.20L768.74,538.95L763.27,535.70L757.84,532.44L752.46,529.19L747.12,525.94L741.83,522.69L736.58,519.43L731.39,516.18L726.25,512.93L721.16,509.67L716.13,506.42L711.16,503.17L706.24,499.92L701.39,496.66L696.59,493.41L691.86,490.16L687.19,486.90L682.58,483.65L678.05,480.40L673.58,477.14L669.18,473.89L664.85,470.64L660.60,467.38L656.42,464.13L652.31,460.88L648.28,457.63L644.33,454.37L640.45,451.12L636.66,447.87L632.94,444.61L629.31,441.36L625.76,438.11L622.30,434.86L618.92,431.60L615.63,428.35L612.42,425.10L609.31,421.84L606.28,418.59L603.34,415.34L600.49,412.08L597.74,408.83L595.08,405.58L592.51,402.32L590.03,399.07L587.66,395.82L585.37,392.57L583.19,389.31L581.10,386.06L579.11,382.81L577.21,379.55L575.42,376.30L573.72,373.05L572.13,369.80L570.64,366.54L569.24,363.29L567.95,360.04L566.76,356.78L565.68,353.53L564.69,350.28L563.81,347.02L563.03,343.77L562.36,340.52L561.78,337.26L561.32,334.01L560.95,330.76L560.69,327.51L560.54,324.25L560.48,321.00L560.54,317.75L560.69,314.49L560.95,311.24L561.32,307.99L561.78,304.74L562.36,301.48L563.03,298.23L563.81,294.98L564.69,291.72L565.68,288.47L566.76,285.22L567.95,281.96L569.24,278.71L570.64,275.46L572.13,272.20L573.72,268.95L575.42,265.70L577.21,262.45L579.11,259.19L581.10,255.94L583.19,252.69L585.37,249.43L587.66,246.18L590.03,242.93L592.51,239.68L595.08,236.42L597.74,233.17L600.49,229.92L603.34,226.66L606.28,223.41L609.31,220.16L612.42,216.90L615.63,213.65L618.92,210.40L622.30,207.14L625.76,203.89L629.31,200.64L632.94,197.39L636.66,194.13L640.45,190.88L644.33,187.63L648.28,184.37L652.31,181.12L656.42,177.87L660.60,174.62L664.85,171.36L669.18,168.11L673.58,164.86L678.05,161.60L682.58,158.35L687.19,155.10L691.86,151.84L696.59,148.59L701.39,145.34L706.24,142.08L711.16,138.83L716.13,135.58L721.16,132.33L726.25,129.07L731.39,125.82L736.58,122.57L741.83,119.31L747.12,116.06L752.46,112.81L757.84,109.55L763.27,106.30L768.74,103.05L774.25,99.80L779.80,96.54L785.39,93.29L791.02,90.04L796.67,86.78L802.36,83.53L808.08,80.28L813.83,77.02L819.61,73.77L825.41,70.52L831.23,67.27L837.08,64.01L842.94,60.76L848.83,57.51L854.73,54.25L860.64,51.00L866.57,47.75L872.51,44.49L878.46,41.24L884.41,37.99L890.37,34.74L896.33,31.48L902.30,28.23"/>
<path d="M902.30,613.77L895.48,610.52L888.67,607.26L881.86,604.01L875.05,600.76L868.25,597.50L861.47,594.25L854.69,591.00L847.93,587.75L841.19,584.49L834.46,581.24L827.76,577.99L821.08,574.73L814.42,571.48L807.79,568.23L801.19,564.97L794.62,561.72L788.09,558.47L781.58,555.22L775.12,551.96L768.69,548.71L762.30,545.46L755.96,542.20L749.66,538.95L743.41,535.70L737.21,532.44L731.05,529.19L724.95,525.94L718.90,522.69L712.91,519.43L706.98,516.18L701.10,512.93L695.29,509.67L689.54,506.42L683.85,503.17L678.23,499.92L672.68,496.66L667.20,493.41L661.79,490.16L656.46,486.90L651.20,483.65L646.01,480.40L640.91,477.14L635.88,473.89L630.93,470.64L626.07,467.38L621.29,464.13L616.60,460.88L611.99,457.63L607.47,454.37L603.05,451.12L598.71,447.87L594.47,444.61L590.31,441.36L586.26,438.11L582.30,434.86L578.44,431.60L574.68,428.35L571.01,425.10L567.45,421.84L563.99,418.59L560.63,415.34L557.38,412.08L554.23,408.83L551.19,405.58L548.25,402.32L545.43,399.07L542.71,395.82L540.10,392.57L537.60,389.31L535.21,386.06L532.94,382.81L530.77,379.55L528.72,376.30L526.79,373.05L524.96,369.80L523.26,366.54L521.66,363.29L520.19,360.04L518.83,356.78L517.59,353.53L516.46,350.28L515.45,347.02L514.56,343.77L513.79,340.52L513.14,337.26L512.60,334.01L512.19,330.76L511.89,327.51L511.71,324.25L511.65,321.00L511.71,317.75L511.89,314.49L512.19,311.24L512.60,307.99L513.14,304.74L513.79,301.48L514.56,298.23L515.45,294.98L516.46,291.72L517.59,288.47L518.83,285.22L520.19,281.96L521.66,278.71L523.26,275.46L524.96,272.20L526.79,268.95L528.72,265.70L530.77,262.45L532.94,259.19L535.21,255.94L537.60,252.69L540.10,249.43L542.71,246.18L545.43,242.93L548.25,239.68L551.19,236.42L554.23,233.17L557.38,229.92L560.63,226.66L563.99,223.41L567.45,220.16L571.01,216.90L574.68,213.65L578.44,210.40L582.30,207.14L586.26,203.89L590.31,200.64L594.47,197.39L598.71,194.13L603.05,190.88L607.47,187.63L611.99,184.37L616.60,181.12L621.29,177.87L626.07,174.62L630.93,171.36L635.88,168.11L640.91,164.86L646.01,161.60L651.20,158.35L656.46,155.10L661.79,151.84L667.20,148.59L672.68,145.34L678.23,142.08L683.85,138.83L689.54,135.58L695.29,132.33L701.10,129.07L706.98,125.82L712.91,122.57L718.90,119.31L724.95,116.06L731.05,112.81L737.21,109.55L743.41,106.30L749.66,103.05L755.96,99.80L762.30,96.54L768.69,93.29L775.12,90.04L781.58,86.78L788.09,83.53L794.62,80.28L801.19,77.02L807.79,73.77L814.42,70.52L821.08,67.27L827.76,64.01L834.46,60.76L841.19,57.51L847.93,54.25L854.69,51.00L861.47,47.75L868.25,44.49L875.05,41.24L881.86,37.99L888.67,34.74L895.48,31.48L902.30,28.23"/>
<path d="M902.30,613.77L894.63,610.52L886.96,607.26L879.30,604.01L871.64,600.76L864.00,597.50L856.36,594.25L848.74,591.00L841.14,587.75L833.55,584.49L825.99,581.24L818.44,577.99L810.93,574.73L803.44,571.48L795.98,568.23L788.55,564.97L781.16,561.72L773.81,558.47L766.49,555.22L759.22,551.96L751.99,548.71L744.80,545.46L737.67,542.20L730.58,538.95L723.55,535.70L716.57,532.44L709.65,529.19L702.78,525.94L695.98,522.69L689.24,519.43L682.56,516.18L675.95,512.93L669.41,509.67L662.94,506.42L656.55,503.17L650.23,499.92L643.98,496.66L637.81,493.41L631.73,490.16L625.73,486.90L619.81,483.65L613.98,480.40L608.23,477.14L602.58,473.89L597.01,470.64L591.54,467.38L586.17,464.13L580.89,460.88L575.70,457.63L570.62,454.37L565.64,451.12L560.76,447.87L555.99,444.61L551.32,441.36L546.75,438.11L542.30,434.86L537.96,431.60L533.72,428.35L529.60,425.10L525.59,421.84L521.70,418.59L517.92,415.34L514.26,412.08L510.72,408.83L507.30,405.58L504.00,402.32L500.82,399.07L497.76,395.82L494.82,392.57L492.01,389.31L489.32,386.06L486.76,382.81L484.33,379.55L482.02,376.30L479.85,373.05L477.80,369.80L475.88,366.54L474.08,363.29L472.42,360.04L470.90,356.78L469.50,353.53L468.23,350.28L467.10,347.02L466.10,343.77L465.23,340.52L464.49,337.26L463.89,334.01L463.42,330.76L463.09,327.51L462.89,324.25L462.82,321.00L462.89,317.75L463.09,314.49L463.42,311.24L463.89,307.99L464.49,304.74L465.23,301.48L466.10,298.23L467.10,294.98L468.23,291.72L469.50,288.47L470.90,285.22L472.42,281.96L474.08,278.71L475.88,275.46L477.80,272.20L479.85,268.95L482.02,265.70L484.33,262.45L486.76,259.19L489.32,255.94L492.01,252.69L494.82,249.43L497.76,246.18L500.82,242.93L504.00,239.68L507.30,236.42L510.72,233.17L514.26,229.92L517.92,226.66L521.70,223.41L525.59,220.16L529.60,216.90L533.72,213.65L537.96,210.40L542.30,207.14L546.75,203.89L551.32,200.64L555.99,197.39L560.76,194.13L565.64,190.88L570.62,187.63L575.70,184.37L580.89,181.12L586.17,177.87L591.54,174.62L597.01,171.36L602.58,168.11L608.23,164.86L613.98,161.60L619.81,158.35L625.73,155.10L631.73,151.84L637.81,148.59L643.98,145.34L650.23,142.08L656.55,138.83L662.94,135.58L669.41,132.33L675.95,129.07L682.56,125.82L689.24,122.57L695.98,119.31L702.78,116.06L709.65,112.81L716.57,109.55L723.55,106.30L730.58,103.05L737.67,99.80L744.80,96.54L751.99,93.29L759.22,90.04L766.49,86.78L773.81,83.53L781.16,80.28L788.55,77.02L795.98,73.77L803.44,70.52L810.93,67.27L818.44,64.01L825.99,60.76L833.55,57.51L841.14,54.25L848.74,51.00L856.36,47.75L864.00,44.49L871.64,41.24L879.30,37.99L886.96,34.74L894.63,31.48L902.30,28.23"/>
<path d="M902.30,613.77L893.78,610.52L885.26,607.26L876.74,604.01L868.24,600.76L859.74,597.50L851.26,594.25L842.79,591.00L834.34,587.75L825.91,584.49L817.51,581.24L809.13,577.99L800.77,574.73L792.45,571.48L784.17,568.23L775.92,564.97L767.70,561.72L759.53,558.47L751.40,555.22L743.32,551.96L735.29,548.71L727.31,545.46L719.38,542.20L711.50,538.95L703.69,535.70L695.93,532.44L688.24,529.19L680.61,525.94L673.05,522.69L665.56,519.43L658.14,516.18L650.80,512.93L643.54,509.67L636.35,506.42L629.24,503.17L622.22,499.92L615.28,496.66L608.43,493.41L601.67,490.16L595.00,486.90L588.42,483.65L581.94,480.40L575.56,477.14L569.27,473.89L563.09,470.64L557.01,467.38L551.04,464.13L545.17,460.88L539.41,457.63L533.77,454.37L528.23,451.12L522.81,447.87L517.51,444.61L512.32,441.36L507.25,438.11L502.30,434.86L497.47,431.60L492.77,428.35L488.19,425.10L483.74,421.84L479.41,418.59L475.21,415.34L471.15,412.08L467.21,408.83L463.41,405.58L459.74,402.32L456.21,399.07L452.81,395.82L449.55,392.57L446.42,389.31L443.44,386.06L440.59,382.81L437.89,379.55L435.33,376.30L432.91,373.05L430.63,369.80L428.49,366.54L426.51,363.29L424.66,360.04L422.96,356.78L421.41,353.53L420.00,350.28L418.74,347.02L417.63,343.77L416.67,340.52L415.85,337.26L415.18,334.01L414.66,330.76L414.29,327.51L414.06,324.25L413.99,321.00L414.06,317.75L414.29,314.49L414.66,311.24L415.18,307.99L415.85,304.74L416.67,301.48L417.63,298.23L418.74,294.98L420.00,291.72L421.41,288.47L422.96,285.22L424.66,281.96L426.51,278.71L428.49,275.46L430.63,272.20L432.91,268.95L435.33,265.70L437.89,262.45L440.59,259.19L443.44,255.94L446.42,252.69L449.55,249.43L452.81,246.18L456.21,242.93L459.74,239.68L463.41,236.42L467.21,233.17L471.15,229.92L475.21,226.66L479.41,223.41L483.74,220.16L488.19,216.90L492.77,213.65L497.47,210.40L502.30,207.14L507.25,203.89L512.32,200.64L517.51,197.39L522.81,194.13L528.23,190.88L533.77,187.63L539.41,184.37L545.17,181.12L551.04,177.87L557.01,174.62L563.09,171.36L569.27,168.11L575.56,164.86L581.94,161.60L588.42,158.35L595.00,155.10L601.67,151.84L608.43,148.59L615.28,145.34L622.22,142.08L629.24,138.83L636.35,135.58L643.54,132.33L650.80,129.07L658.14,125.82L665.56,122.57L673.05,119.31L680.61,116.06L688.24,112.81L695.93,109.55L703.69,106.30L711.50,103.05L719.38,99.80L727.31,96.54L735.29,93.29L743.32,90.04L751.40,86.78L759.53,83.53L767.70,80.28L775.92,77.02L784.17,73.77L792.45,70.52L800.77,67.27L809.13,64.01L817.51,60.76L825.91,57.51L834.34,54.25L842.79,51.00L851.26,47.75L859.74,44.49L868.24,41.24L876.74,37.99L885.26,34.74L893.78,31.48L902.30,28.23"/>
<path d="M902.30,613.77L892.93,610.52L883.55,607.26L874.19,604.01L864.83,600.76L855.49,597.50L846.15,594.25L836.84,591.00L827.54,587.75L818.27,584.49L809.03,581.24L799.81,577.99L790.62,574.73L781.47,571.48L772.35,568.23L763.28,564.97L754.24,561.72L745.26,558.47L736.31,555.22L727.42,551.96L718.59,548.71L709.81,545.46L701.08,542.20L692.42,538.95L683.83,535.70L675.29,532.44L666.83,529.19L658.44,525.94L650.13,522.69L641.89,519.43L633.73,516.18L625.65,512.93L617.66,509.67L609.75,506.42L601.93,503.17L594.21,499.92L586.58,496.66L579.04,493.41L571.60,490.16L564.27,486.90L557.03,483.65L549.90,480.40L542.88,477.14L535.97,473.89L529.17,470.64L522.48,467.38L515.91,464.13L509.46,460.88L503.13,457.63L496.91,454.37L490.83,451.12L484.86,447.87L479.03,444.61L473.32,441.36L467.74,438.11L462.30,434.86L456.99,431.60L451.82,428.35L446.78,425.10L441.88,421.84L437.12,418.59L432.51,415.34L428.03,412.08L423.70,408.83L419.52,405.58L415.48,402.32L411.60,399.07L407.86,395.82L404.27,392.57L400.84,389.31L397.55,386.06L394.42,382.81L391.45,379.55L388.63,376.30L385.97,373.05L383.46,369.80L381.11,366.54L378.93,363.29L376.90,360.04L375.03,356.78L373.32,353.53L371.77,350.28L370.39,347.02L369.16,343.77L368.10,340.52L367.20,337.26L366.47,334.01L365.90,330.76L365.49,327.51L365.24,324.25L365.16,321.00L365.24,317.75L365.49,314.49L365.90,311.24L366.47,307.99L367.20,304.74L368.10,301.48L369.16,298.23L370.39,294.98L371.77,291.72L373.32,288.47L375.03,285.22L376.90,281.96L378.93,278.71L381.11,275.46L383.46,272.20L385.97,268.95L388.63,265.70L391.45,262.45L394.42,259.19L397.55,255.94L400.84,252.69L404.27,249.43L407.86,246.18L411.60,242.93L415.48,239.68L419.52,236.42L423.70,233.17L428.03,229.92L432.51,226.66L437.12,223.41L441.88,220.16L446.78,216.90L451.82,213.65L456.99,210.40L462.30,207.14L467.74,203.89L473.32,200.64L479.03,197.39L484.86,194.13L490.83,190.88L496.91,187.63L503.13,184.37L509.46,181.12L515.91,177.87L522.48,174.62L529.17,171.36L535.97,168.11L542.88,164.86L549.90,161.60L557.03,158.35L564.27,155.10L571.60,151.84L579.04,148.59L586.58,145.34L594.21,142.08L601.93,138.83L609.75,135.58L617.66,132.33L625.65,129.07L633.73,125.82L641.89,122.57L650.13,119.31L658.44,116.06L666.83,112.81L675.29,109.55L683.83,106.30L692.42,103.05L701.08,99.80L709.81,96.54L718.59,93.29L727.42,90.04L736.31,86.78L745.26,83.53L754.24,80.28L763.28,77.02L772.35,73.77L781.47,70.52L790.62,67.27L799.81,64.01L809.03,60.76L818.27,57.51L827.54,54.25L836.84,51.00L846.15,47.75L855.49,44.49L864.83,41.24L874.19,37.99L883.55,34.74L892.93,31.48L902.30,28.23"/>
<path d="M902.30,613.77L892.07,610.52L881.85,607.26L871.63,604.01L861.42,600.76L851.23,597.50L841.05,594.25L830.89,591.00L820.75,587.75L810.63,584.49L800.55,581.24L790.49,577.99L780.47,574.73L770.48,571.48L760.54,568.23L750.64,564.97L740.78,561.72L730.98,558.47L721.22,555.22L711.53,551.96L701.89,548.71L692.31,545.46L682.79,542.20L673.34,538.95L663.96,535.70L654.66,532.44L645.43,529.19L636.27,525.94L627.20,522.69L618.22,519.43L609.31,516.18L600.50,512.93L591.78,509.67L583.16,506.42L574.63,503.17L566.20,499.92L557.87,496.66L549.65,493.41L541.54,490.16L533.54,486.90L525.64,483.65L517.87,480.40L510.21,477.14L502.67,473.89L495.25,470.64L487.96,467.38L480.79,464.13L473.75,460.88L466.84,457.63L460.06,454.37L453.42,451.12L446.91,447.87L440.55,444.61L434.32,441.36L428.24,438.11L422.30,434.86L416.51,431.60L410.86,428.35L405.37,425.10L400.02,421.84L394.83,418.59L389.80,415.34L384.92,412.08L380.20,408.83L375.63,405.58L371.23,402.32L366.99,399.07L362.91,395.82L359.00,392.57L355.25,389.31L351.67,386.06L348.25,382.81L345.01,379.55L341.93,376.30L339.03,373.05L336.29,369.80L333.73,366.54L331.35,363.29L329.13,360.04L327.09,356.78L325.23,353.53L323.54,350.28L322.03,347.02L320.70,343.77L319.54,340.52L318.56,337.26L317.76,334.01L317.13,330.76L316.68,327.51L316.42,324.25L316.33,321.00L316.42,317.75L316.68,314.49L317.13,311.24L317.76,307.99L318.56,304.74L319.54,301.48L320.70,298.23L322.03,294.98L323.54,291.72L325.23,288.47L327.09,285.22L329.13,281.96L331.35,278.71L333.73,275.46L336.29,272.20L339.03,268.95L341.93,265.70L345.01,262.45L348.25,259.19L351.67,255.94L355.25,252.69L359.00,249.43L362.91,246.18L366.99,242.93L371.23,239.68L375.63,236.42L380.20,233.17L384.92,229.92L389.80,226.66L394.83,223.41L400.02,220.16L405.37,216.90L410.86,213.65L416.51,210.40L422.30,207.14L428.24,203.89L434.32,200.64L440.55,197.39L446.91,194.13L453.42,190.88L460.06,187.63L466.84,184.37L473.75,181.12L480.79,177.87L487.96,174.62L495.25,171.36L502.67,168.11L510.21,164.86L517.87,161.60L525.64,158.35L533.54,155.10L541.54,151.84L549.65,148.59L557.87,145.34L566.20,142.08L574.63,138.83L583.16,135.58L591.78,132.33L600.50,129.07L609.31,125.82L618.22,122.57L627.20,119.31L636.27,116.06L645.43,112.81L654.66,109.55L663.96,106.30L673.34,103.05L682.79,99.80L692.31,96.54L701.89,93.29L711.53,90.04L721.22,86.78L730.98,83.53L740.78,80.28L750.64,77.02L760.54,73.77L770.48,70.52L780.47,67.27L790.49,64.01L800.55,60.76L810.63,57.51L820.75,54.25L830.89,51.00L841.05,47.75L851.23,44.49L861.42,41.24L871.63,37.99L881.85,34.74L892.07,31.48L902.30,28.23"/>
</g>
<g fill="none" stroke="#8c8c8c" stroke-opacity="0.38" stroke-width="1.389" stroke-dasharray="1.389 2.292">
<path d="M1123.60,236.60L1124.62,236.04L1125.64,235.48L1126.66,234.93L1127.68,234.39L1128.70,233.85L1129.73,233.31L1130.75,232.78L1131.78,232.25L1132.81,231.73L1133.84,231.22L1134.87,230.70L1135.90,230.20L1136.93,229.70L1137.97,229.20L1139.01,228.71L1140.05,228.23L1141.09,227.75L1142.13,227.28L1143.18,226.81L1144.23,226.34L1145.28,225.89L1146.33,225.44L1147.39,224.99L1148.45,224.55L1149.51,224.12L1150.58,223.69L1151.64,223.27L1152.72,222.85L1153.79,222.44L1154.87,222.03L1155.95,221.64L1157.04,221.24L1158.13,220.86L1159.22,220.48L1160.32,220.10L1161.42,219.74L1162.53,219.38L1163.64,219.02L1164.76,218.67L1165.88,218.33L1167.00,218.00L1168.13,217.67L1169.27,217.35L1170.41,217.03L1171.55,216.72L1172.70,216.42L1173.86,216.12L1175.02,215.84L1176.19,215.55L1177.36,215.28L1178.54,215.01L1179.72,214.75L1180.91,214.50L1182.11,214.25L1183.31,214.01L1184.52,213.78L1185.73,213.55L1186.96,213.33L1188.19,213.12L1189.42,212.92L1190.66,212.72L1191.91,212.53L1193.17,212.35L1194.43,212.17L1195.70,212.00L1196.98,211.84L1198.27,211.69L1199.56,211.54L1200.86,211.40L1202.17,211.27L1203.49,211.15L1204.81,211.03L1206.14,210.92L1207.48,210.82L1208.83,210.73L1210.19,210.64L1211.55,210.56L1212.93,210.49L1214.31,210.43L1215.70,210.37L1217.09,210.32L1218.50,210.28L1219.92,210.25L1221.34,210.22L1222.77,210.20L1224.21,210.19L1225.66,210.19L1227.12,210.19L1228.59,210.21L1230.07,210.23L1231.55,210.25L1233.05,210.29L1234.55,210.33L1236.06,210.38L1237.58,210.44L1239.11,210.50L1240.65,210.57L1242.20,210.65L1243.76,210.74L1245.32,210.84L1246.90,210.94L1248.49,211.05L1250.08,211.17L1251.68,211.29L1253.29,211.42L1254.91,211.56L1256.54,211.71L1258.18,211.87L1259.83,212.03L1261.49,212.20L1263.15,212.37L1264.83,212.56L1266.51,212.75L1268.20,212.95L1269.91,213.15L1271.61,213.36L1273.33,213.58L1275.06,213.81L1276.80,214.04L1278.54,214.29L1280.29,214.53L1282.05,214.79L1283.82,215.05L1285.60,215.32L1287.38,215.60L1289.18,215.88L1290.98,216.17L1292.79,216.46L1294.60,216.77L1296.43,217.08L1298.26,217.39L1300.10,217.72L1301.95,218.05L1303.80,218.38L1305.66,218.72L1307.53,219.07L1309.41,219.43L1311.29,219.79L1313.18,220.16L1315.07,220.53L1316.98,220.91L1318.89,221.30L1320.80,221.69L1322.72,222.09L1324.65,222.50L1326.58,222.91L1328.52,223.33L1330.46,223.75L1332.41,224.18L1334.37,224.62L1336.33,225.06L1338.30,225.50L1340.27,225.96L1342.24,226.41L1344.22,226.88L1346.20,227.35L1348.19,227.82L1350.18,228.30L1352.18,228.79"/>
<path d="M1242.00,233.00L1242.69,232.56L1243.39,232.12L1244.09,231.69L1244.79,231.26L1245.49,230.83L1246.19,230.41L1246.89,229.98L1247.60,229.57L1248.30,229.15L1249.01,228.74L1249.72,228.34L1250.43,227.93L1251.15,227.54L1251.86,227.14L1252.58,226.75L1253.30,226.36L1254.03,225.97L1254.75,225.59L1255.48,225.22L1256.21,224.84L1256.94,224.47L1257.68,224.11L1258.42,223.75L1259.16,223.39L1259.91,223.04L1260.65,222.69L1261.40,222.34L1262.16,222.00L1262.92,221.66L1263.68,221.33L1264.44,221.00L1265.21,220.67L1265.98,220.35L1266.76,220.03L1267.54,219.72L1268.32,219.41L1269.11,219.11L1269.90,218.80L1270.70,218.51L1271.50,218.22L1272.30,217.93L1273.11,217.65L1273.92,217.37L1274.74,217.09L1275.56,216.82L1276.39,216.56L1277.22,216.30L1278.06,216.04L1278.90,215.79L1279.75,215.54L1280.60,215.30L1281.45,215.06L1282.32,214.82L1283.18,214.60L1284.06,214.37L1284.94,214.15L1285.82,213.94L1286.71,213.73L1287.61,213.52L1288.51,213.32L1289.42,213.12L1290.33,212.93L1291.25,212.74L1292.18,212.56L1293.11,212.38L1294.05,212.21L1294.99,212.04L1295.94,211.88L1296.90,211.72L1297.86,211.57L1298.83,211.42L1299.81,211.28L1300.80,211.14L1301.79,211.01L1302.78,210.88L1303.79,210.76L1304.80,210.64L1305.82,210.52L1306.84,210.42L1307.88,210.31L1308.92,210.21L1309.96,210.12L1311.02,210.03L1312.08,209.95L1313.15,209.87L1314.23,209.80L1315.31,209.73L1316.40,209.67L1317.50,209.61L1318.61,209.55L1319.72,209.51L1320.84,209.46L1321.97,209.43L1323.11,209.39L1324.26,209.37L1325.41,209.34L1326.57,209.33L1327.74,209.32L1328.91,209.31L1330.10,209.31L1331.29,209.31L1332.49,209.32L1333.70,209.33L1334.92,209.35L1336.14,209.37L1337.37,209.40L1338.62,209.44L1339.86,209.48L1341.12,209.52L1342.39,209.57L1343.66,209.62L1344.94,209.68L1346.23,209.75L1347.53,209.82L1348.83,209.89L1350.14,209.97L1351.46,210.06L1352.79,210.14L1354.13,210.24L1355.48,210.34L1356.83,210.44L1358.19,210.55L1359.56,210.67L1360.94,210.79L1362.32,210.91L1363.72,211.04L1365.12,211.18L1366.53,211.32L1367.94,211.46L1369.37,211.61L1370.80,211.77L1372.24,211.92L1373.69,212.09L1375.14,212.26L1376.61,212.43L1378.08,212.61L1379.56,212.79L1381.04,212.98L1382.54,213.17L1384.04,213.37L1385.54,213.57L1387.06,213.78L1388.58,213.99L1390.11,214.21L1391.65,214.43L1393.19,214.66L1394.74,214.89L1396.30,215.12L1397.87,215.36"/>
<path d="M407.23,215.61L407.98,215.86L408.72,216.11L409.45,216.37L410.18,216.63L410.90,216.90L411.61,217.17L412.32,217.44L413.03,217.72L413.72,218.01"/>
<path d="M1241.50,232.80L1242.38,232.29L1243.27,231.78L1244.16,231.27L1245.05,230.77L1245.94,230.28L1246.83,229.79L1247.73,229.31L1248.63,228.83L1249.54,228.36L1250.45,227.89L1251.36,227.43L1252.27,226.98L1253.19,226.52L1254.11,226.08L1255.04,225.64L1255.97,225.21L1256.90,224.78L1257.84,224.36L1258.78,223.94L1259.73,223.53L1260.68,223.13L1261.64,222.73L1262.60,222.34L1263.57,221.95L1264.54,221.57L1265.52,221.20L1266.51,220.83L1267.50,220.47L1268.49,220.12L1269.50,219.77L1270.51,219.43L1271.52,219.09L1272.54,218.76L1273.57,218.44L1274.61,218.13L1275.65,217.82L1276.70,217.51L1277.75,217.22L1278.82,216.93L1279.89,216.64L1280.97,216.37L1282.06,216.10L1283.15,215.84L1284.25,215.58L1285.36,215.33L1286.48,215.09L1287.61,214.86L1288.75,214.63L1289.89,214.41L1291.05,214.20L1292.21,213.99L1293.38,213.79L1294.56,213.60L1295.75,213.41L1296.95,213.23L1298.16,213.06L1299.38,212.90L1300.61,212.74L1301.85,212.60L1303.10,212.45L1304.36,212.32L1305.63,212.19L1306.91,212.07L1308.19,211.96L1309.49,211.86L1310.81,211.76L1312.13,211.67L1313.46,211.59L1314.80,211.51L1316.15,211.44L1317.52,211.38L1318.89,211.33L1320.28,211.29L1321.68,211.25L1323.08,211.22L1324.50,211.20L1325.93,211.18L1327.38,211.17L1328.83,211.17L1330.29,211.18L1331.77,211.19L1333.26,211.22L1334.76,211.25L1336.27,211.28L1337.79,211.33L1339.32,211.38L1340.87,211.44L1342.42,211.51L1343.99,211.58L1345.57,211.66L1347.16,211.75L1348.76,211.85L1350.38,211.95L1352.00,212.07L1353.64,212.18L1355.29,212.31L1356.95,212.44L1358.62,212.59L1360.30,212.73L1362.00,212.89L1363.70,213.05L1365.42,213.22L1367.15,213.40L1368.89,213.58L1370.64,213.78L1372.40,213.97L1374.17,214.18L1375.95,214.39L1377.75,214.61L1379.55,214.84L1381.37,215.07L1383.19,215.32L1385.03,215.56L1386.88,215.82L1388.73,216.08L1390.60,216.35L1392.48,216.62L1394.36,216.91L1396.26,217.20L1398.17,217.49L1400.08,217.79L1402.01,218.10"/>
<path d="M402.44,218.42L403.34,218.74L404.22,219.07L405.10,219.40L405.97,219.74L406.83,220.09L407.68,220.45L408.52,220.81L409.36,221.17L410.18,221.55L411.00,221.93L411.81,222.31L412.62,222.70L413.42,223.10L414.21,223.50L414.99,223.91L415.77,224.33L416.54,224.75L417.31,225.18L418.07,225.61L418.82,226.05L419.57,226.49L420.32,226.94L421.06,227.40L421.79,227.86L422.52,228.33L423.24,228.80L423.96,229.27L424.68,229.76L425.39,230.24L426.10,230.74L426.81,231.24L427.51,231.74L428.21,232.25L428.90,232.76L429.60,233.28L430.29,233.80"/>
<path d="M1238.00,235.50L1238.76,235.00L1239.53,234.49L1240.29,234.00L1241.06,233.50L1241.82,233.01L1242.59,232.53L1243.36,232.05L1244.13,231.57L1244.91,231.10L1245.68,230.63L1246.46,230.16L1247.24,229.70L1248.02,229.25L1248.80,228.80L1249.59,228.35L1250.38,227.91L1251.17,227.47L1251.96,227.03L1252.76,226.60L1253.55,226.18L1254.36,225.76L1255.16,225.34L1255.97,224.93L1256.78,224.52L1257.59,224.12L1258.41,223.72L1259.23,223.33L1260.06,222.94L1260.88,222.56L1261.72,222.18L1262.55,221.81L1263.39,221.44L1264.24,221.08L1265.09,220.72L1265.94,220.36L1266.80,220.01L1267.66,219.67L1268.53,219.33L1269.40,219.00L1270.28,218.67L1271.17,218.35L1272.05,218.03L1272.95,217.72L1273.85,217.41L1274.75,217.11L1275.66,216.82L1276.58,216.53L1277.50,216.24L1278.43,215.96L1279.36,215.69L1280.30,215.42L1281.25,215.16L1282.20,214.90L1283.16,214.65L1284.13,214.40L1285.10,214.16L1286.08,213.93L1287.07,213.70L1288.06,213.47L1289.06,213.26L1290.07,213.04L1291.09,212.84L1292.11,212.64L1293.14,212.44L1294.18,212.26L1295.22,212.07L1296.28,211.90L1297.34,211.73L1298.41,211.56L1299.49,211.40L1300.57,211.25L1301.67,211.10L1302.77,210.96L1303.88,210.83L1305.00,210.70L1306.13,210.58L1307.26,210.46L1308.41,210.35L1309.56,210.24L1310.73,210.15L1311.90,210.05L1313.08,209.97L1314.27,209.89L1315.47,209.81L1316.67,209.75L1317.89,209.69L1319.12,209.63L1320.35,209.58L1321.60,209.54L1322.85,209.50L1324.12,209.47L1325.39,209.45L1326.67,209.43L1327.97,209.42L1329.27,209.41L1330.58,209.41L1331.90,209.42L1333.23,209.44L1334.57,209.45L1335.92,209.48L1337.28,209.51L1338.65,209.55L1340.03,209.59L1341.42,209.65L1342.82,209.70L1344.23,209.76L1345.65,209.83L1347.08,209.91L1348.52,209.99L1349.96,210.08L1351.42,210.17L1352.89,210.27L1354.37,210.38L1355.85,210.49L1357.35,210.61L1358.86,210.73L1360.38,210.86L1361.90,211.00L1363.44,211.14L1364.98,211.29L1366.54,211.44L1368.10,211.60L1369.68,211.77L1371.26,211.94L1372.85,212.12L1374.45,212.30L1376.06,212.49L1377.69,212.69L1379.31,212.89L1380.95,213.10L1382.60,213.31L1384.26,213.53L1385.92,213.76L1387.60,213.99L1389.28,214.22L1390.97,214.47L1392.67,214.71L1394.38,214.97L1396.10,215.23L1397.83,215.49"/>
<path d="M406.84,215.76L407.66,216.04L408.48,216.32L409.29,216.60L410.08,216.90L410.88,217.19L411.66,217.50L412.44,217.80L413.21,218.12L413.97,218.44L414.72,218.76L415.47,219.09L416.21,219.42L416.95,219.76L417.68,220.11L418.40,220.46L419.12,220.81L419.83,221.17L420.53,221.54"/>
<path d="M1143.00,202.60L1144.01,203.82L1145.01,205.04L1146.00,206.27L1146.97,207.49L1147.94,208.71L1148.90,209.93L1149.85,211.16L1150.78,212.38L1151.71,213.60L1152.62,214.83L1153.53,216.05L1154.42,217.27L1155.30,218.50L1156.17,219.72L1157.03,220.94L1157.88,222.17L1158.72,223.39L1159.55,224.61L1160.37,225.84L1161.17,227.06L1161.97,228.28L1162.75,229.51L1163.52,230.73L1164.28,231.95L1165.03,233.18L1165.77,234.40L1166.50,235.62L1167.21,236.85L1167.92,238.07L1168.61,239.30L1169.29,240.52L1169.96,241.74L1170.62,242.97L1171.27,244.19L1171.90,245.42L1172.53,246.64L1173.14,247.86L1173.74,249.09L1174.33,250.31L1174.91,251.54L1175.47,252.76L1176.02,253.99L1176.57,255.21L1177.10,256.43L1177.61,257.66L1178.12,258.88L1178.61,260.11L1179.10,261.33L1179.57,262.56L1180.03,263.78L1180.47,265.01L1180.91,266.23L1181.33,267.45L1181.74,268.68L1182.14,269.90L1182.52,271.13L1182.90,272.35L1183.26,273.58L1183.61,274.80L1183.95,276.03L1184.27,277.25L1184.59,278.48L1184.89,279.70L1185.18,280.93L1185.45,282.15L1185.72,283.38L1185.97,284.60L1186.21,285.83L1186.44,287.05L1186.65,288.27L1186.86,289.50L1187.05,290.72L1187.23,291.95L1187.39,293.17L1187.55,294.40L1187.69,295.62L1187.82,296.85L1187.94,298.07L1188.04,299.30L1188.13,300.52L1188.22,301.75L1188.28,302.97L1188.34,304.20L1188.38,305.42L1188.41,306.65L1188.43,307.87L1188.44,309.10L1188.43,310.32L1188.41,311.55L1188.38,312.77L1188.34,314.00L1188.28,315.22L1188.21,316.45L1188.13,317.67L1188.04,318.90L1187.94,320.12L1187.82,321.35L1187.69,322.57L1187.55,323.80L1187.39,325.02L1187.22,326.25L1187.05,327.47L1186.85,328.70L1186.65,329.92L1186.43,331.15L1186.21,332.37L1185.97,333.60L1185.71,334.82L1185.45,336.05L1185.17,337.27L1184.88,338.50L1184.58,339.72L1184.27,340.95L1183.94,342.17L1183.60,343.40L1183.25,344.62L1182.89,345.85L1182.51,347.07L1182.13,348.30"/>
<path d="M1214.00,249.50L1220.00,241.10L1232.20,225.60L1245.60,208.90L1256.70,198.90L1273.30,190.60L1290.00,187.30L1306.70,186.10L1325.00,186.40L1343.30,188.30"/>
<path d="M460,189.6L486.7,209.1"/>
</g>
<g fill="none" stroke="#808080" stroke-width="1.4" stroke-linecap="butt">
<path d="M1123.6,236.6L1068.4,272.0"/>
<path d="M1143.0,202.6L1127.0,186.0"/>
<path d="M1242.0,233.0L1155.4,299.2"/>
<path d="M1241.5,232.8L1164.5,289.0"/>
<path d="M1238.0,235.5L1160.0,295.5"/>
<path d="M1220.0,249.5L1157.0,298.0"/>
</g>
<path d="M945.70,217.80L944.13,217.13L942.57,216.46L941.00,215.80L939.44,215.15L937.88,214.51L936.31,213.87L934.75,213.24L933.19,212.62L931.63,212.01L930.06,211.40L928.50,210.80L926.94,210.21L925.38,209.63L923.82,209.06L922.26,208.50L920.71,207.94L919.15,207.39L917.59,206.85L916.03,206.32L914.48,205.80L912.92,205.29L911.36,204.79L909.81,204.29L908.25,203.81L906.69,203.33L905.14,202.86L903.58,202.40L902.03,201.96L900.47,201.52L898.92,201.09L897.36,200.67L895.81,200.26L894.25,199.86L892.69,199.47L891.14,199.09L889.58,198.72L888.02,198.36L886.46,198.01L884.90,197.67L883.34,197.34L881.78,197.03L880.22,196.72L878.66,196.42L877.10,196.14L875.53,195.86L873.97,195.59L872.40,195.34L870.83,195.10L869.27,194.86L867.69,194.64L866.12,194.43L864.55,194.23L862.97,194.04L861.39,193.87L859.82,193.70L858.23,193.55L856.65,193.40L855.06,193.27L853.48,193.15L851.89,193.04L850.29,192.94L848.70,192.85L847.10,192.78L845.50,192.71L843.89,192.66L842.29,192.62L840.68,192.59L839.06,192.57L837.45,192.56L835.83,192.57L834.21,192.58L832.58,192.61L830.95,192.65L829.32,192.70L827.68,192.76L826.04,192.83L824.40,192.92L822.75,193.01L821.10,193.12L819.44,193.24L817.78,193.37L816.12,193.51L814.45,193.66L812.78,193.82L811.10,194.00L809.42,194.19L807.73,194.38L806.04,194.59L804.35,194.81L802.65,195.04L800.95,195.28L799.24,195.53L797.53,195.79L795.81,196.07L794.09,196.35L792.36,196.64L790.63,196.95L788.90,197.27L787.16,197.59L785.42,197.93L783.67,198.27L781.91,198.63L780.16,199.00L778.39,199.38L776.63,199.76L774.85,200.16L773.08,200.57L771.30,200.98L769.51,201.41L767.72,201.85L765.93,202.29L764.13,202.75L762.33,203.21L760.52,203.69L758.71,204.17L756.90,204.66L755.08,205.16L753.26,205.68L751.43,206.19L749.60,206.72L747.77,207.26L745.93,207.81L744.09,208.36L742.25,208.92L740.40,209.49L738.55,210.07L736.69,210.66L734.84,211.25L732.97,211.86L731.11,212.47L729.24,213.09L727.38,213.72L725.50,214.35L723.63,214.99L721.75,215.64L719.87,216.30L717.99,216.96L716.11,217.63L714.23,218.31L712.34,219.00L710.45,219.69L708.56,220.39L706.67,221.10L704.78,221.81L702.88,222.53L700.99,223.25L699.09,223.99L697.20,224.73L695.30,225.47L693.40,226.22L691.50,226.98L689.61,227.74L687.71,228.51L685.81,229.28L683.91,230.06L682.01,230.85L680.12,231.64L678.22,232.44L676.33,233.24L674.43,234.05L672.54,234.86L670.65,235.68L668.76,236.50L666.87,237.33L664.98,238.16L663.10,239.00L661.21,239.84L659.33,240.69L657.45,241.54L655.58,242.40L653.70,243.26L651.83,244.13L649.96,245.00L648.10,245.87L646.24,246.75L644.38,247.63L642.52,248.52L640.67,249.41L638.82,250.30L636.98,251.20L635.14,252.10L633.31,253.01L631.48,253.92L629.65,254.83L627.83,255.74L626.01,256.66L624.20,257.59L622.39,258.51L620.59,259.44L618.80,260.37L617.01,261.31L615.22,262.25L613.44,263.19L611.67,264.14L609.90,265.08L608.14,266.03L606.39,266.99L604.64,267.94L602.90,268.90" fill="none" stroke="#2ab07f" stroke-width="1.389" stroke-dasharray="1.389 2.292"/>
<path d="M945.7,217.8L963.9,225.9" fill="none" stroke="#2ab07f" stroke-width="1.45"/>
<rect x="962.8" y="224.8" width="2.2" height="2.2" fill="#ff6040"/>
<path d="M1010.50,180.00L1008.57,178.62L1006.64,177.25L1004.70,175.88L1002.76,174.52L1000.83,173.17L998.89,171.83L996.95,170.50L995.01,169.17L993.07,167.86L991.13,166.55L989.19,165.25L987.25,163.96L985.32,162.68L983.38,161.41L981.45,160.16L979.51,158.91L977.58,157.67L975.65,156.45L973.73,155.23L971.80,154.03L969.88,152.84L967.97,151.67L966.05,150.51L964.14,149.36L962.24,148.22L960.33,147.10L958.43,146.00L956.54,144.91L954.65,143.83L952.76,142.77L950.88,141.73L949.01,140.70L947.14,139.70L945.27,138.71L943.41,137.74L941.55,136.78L939.70,135.85L937.86,134.94L936.02,134.05L934.18,133.17L932.35,132.32L930.52,131.50L928.70,130.69L926.89,129.91L925.08,129.15L923.27,128.42L921.47,127.71L919.67,127.03L917.88,126.37L916.09,125.74L914.30,125.13L912.52,124.56L910.74,124.01L908.96,123.49L907.18,122.99L905.40,122.53L903.63,122.10L901.85,121.70L900.08,121.32L898.30,120.98L896.52,120.67L894.75,120.39L892.96,120.15L891.18,119.93L889.39,119.75L887.60,119.60L885.80,119.48L884.00,119.40L882.19,119.35L880.38,119.33L878.56,119.34L876.73,119.39L874.89,119.47L873.04,119.58L871.19,119.73L869.32,119.91L867.44,120.12L865.55,120.36L863.66,120.64L861.74,120.94L859.82,121.28L857.88,121.65L855.93,122.05L853.97,122.48L852.00,122.94L850.01,123.43L848.00,123.94L845.98,124.49L843.95,125.06L841.91,125.66L839.84,126.29L837.77,126.95L835.68,127.63L833.58,128.33L831.46,129.07L829.33,129.82L827.18,130.60L825.02,131.40L822.85,132.23L820.66,133.07L818.46,133.94L816.25,134.83L814.02,135.74L811.78,136.67L809.53,137.62L807.27,138.59L805.00,139.58L802.71,140.58L800.42,141.61L798.12,142.65L795.80,143.71L793.48,144.78L791.15,145.87L788.80,146.97L786.46,148.09L784.10,149.22L781.73,150.37L779.36,151.53L776.99,152.71L774.60,153.89L772.22,155.09L769.82,156.30L767.43,157.53L765.02,158.76L762.62,160.01L760.21,161.27L757.80,162.53L755.39,163.81L752.97,165.10L750.56,166.39L748.14,167.70L745.72,169.02L743.30,170.34L740.89,171.67L738.47,173.02L736.06,174.36L733.64,175.72L731.23,177.09L728.83,178.46L726.42,179.84L724.02,181.22L721.62,182.62L719.23,184.02L716.84,185.42L714.46,186.84L712.08,188.25L709.71,189.68L707.34,191.11L704.98,192.54L702.63,193.98L700.29,195.43L697.95,196.88L695.62,198.34L693.30,199.80L690.99,201.27L688.69,202.74L686.40,204.21L684.12,205.69L681.85,207.17L679.59,208.66L677.34,210.15L675.10,211.65L672.87,213.15L670.66,214.65L668.45,216.16L666.26,217.67L664.09,219.18L661.92,220.69L659.77,222.21L657.64,223.74L655.52,225.26L653.41,226.79L651.31,228.32L649.24,229.86L647.17,231.39L645.13,232.93L643.09,234.47L641.08,236.02L639.08,237.56L637.10,239.11L635.13,240.66L633.18,242.22L631.25,243.77L629.34,245.33L627.44,246.89L625.56,248.45L623.70,250.01L621.86,251.58L620.04,253.15L618.24,254.71L616.45,256.29L614.69,257.86L612.94,259.43L611.22,261.01L609.51,262.58L607.83,264.16L606.17,265.74L604.52,267.32L602.90,268.90" fill="none" stroke="#2ab07f" stroke-width="1.389" stroke-dasharray="1.389 2.292"/>
<path d="M1010.5,180.0L1038.0,200.9" fill="none" stroke="#2ab07f" stroke-width="1.45"/>
<rect x="1036.9" y="199.8" width="2.2" height="2.2" fill="#ff6040"/>
<path d="M1066.00,163.80L1063.87,163.04L1061.74,162.28L1059.62,161.54L1057.52,160.81L1055.42,160.10L1053.33,159.39L1051.25,158.70L1049.18,158.02L1047.12,157.36L1045.07,156.71L1043.04,156.07L1041.01,155.44L1039.00,154.83L1036.99,154.23L1035.00,153.65L1033.02,153.08L1031.05,152.53L1029.09,151.99L1027.15,151.47L1025.22,150.96L1023.30,150.47L1021.39,149.99L1019.49,149.53L1017.61,149.09L1015.74,148.66L1013.88,148.25L1012.03,147.85L1010.20,147.48L1008.38,147.11L1006.57,146.77L1004.78,146.44L1002.99,146.13L1001.22,145.84L999.47,145.57L997.72,145.31L995.99,145.07L994.27,144.85L992.56,144.65L990.86,144.46L989.18,144.30L987.51,144.15L985.85,144.02L984.20,143.91L982.56,143.82L980.93,143.75L979.32,143.69L977.71,143.66L976.11,143.64L974.53,143.64L972.96,143.66L971.39,143.70L969.84,143.76L968.29,143.83L966.75,143.93L965.23,144.04L963.71,144.17L962.20,144.32L960.69,144.49L959.20,144.68L957.71,144.89L956.23,145.11L954.76,145.35L953.29,145.61L951.84,145.89L950.38,146.18L948.93,146.49L947.49,146.82L946.06,147.17L944.63,147.54L943.20,147.92L941.78,148.31L940.36,148.73L938.95,149.16L937.54,149.61L936.14,150.07L934.74,150.55L933.34,151.04L931.94,151.55L930.55,152.08L929.16,152.62L927.77,153.18L926.39,153.75L925.01,154.33L923.63,154.93L922.25,155.54L920.87,156.17L919.50,156.81L918.12,157.47L916.75,158.13L915.37,158.81L914.00,159.51L912.63,160.21L911.26,160.93L909.89,161.66L908.52,162.40L907.16,163.16L905.79,163.93L904.42,164.70L903.05,165.49L901.68,166.29L900.31,167.10L898.95,167.92L897.58,168.76L896.21,169.60L894.84,170.45L893.47,171.31L892.10,172.18L890.73,173.06L889.36,173.95L887.99,174.85L886.62,175.76L885.25,176.68L883.88,177.61L882.51,178.54L881.13,179.48L879.76,180.43L878.39,181.39L877.02,182.36L875.64,183.34L874.27,184.32L872.90,185.31L871.52,186.30L870.15,187.31L868.77,188.32L867.40,189.33L866.03,190.36L864.65,191.39L863.28,192.43L861.90,193.47L860.53,194.52L859.16,195.57L857.78,196.64L856.41,197.70L855.04,198.78L853.67,199.85L852.30,200.94L850.93,202.03L849.56,203.12L848.19,204.22L846.82,205.32L845.45,206.43L844.09,207.55L842.72,208.67L841.36,209.79L839.99,210.92L838.63,212.05L837.27,213.18L835.91,214.33L834.56,215.47L833.20,216.62L831.85,217.77L830.50,218.93L829.15,220.09L827.80,221.25L826.45,222.42L825.11,223.59L823.77,224.77L822.43,225.94L821.09,227.13L819.76,228.31L818.42,229.50L817.09,230.69L815.77,231.88L814.44,233.08L813.12,234.28L811.81,235.48L810.49,236.69L809.18,237.90L807.87,239.11L806.57,240.32L805.27,241.54L803.97,242.75L802.68,243.98L801.39,245.20L800.10,246.42L798.82,247.65L797.54,248.88L796.27,250.11L795.00,251.35L793.73,252.58L792.47,253.82L791.21,255.06L789.96,256.31L788.71,257.55L787.47,258.80L786.23,260.04L785.00,261.29L783.77,262.54L782.54,263.80L781.32,265.05L780.11,266.31L778.90,267.56L777.70,268.82L776.50,270.08L775.31,271.34L774.12,272.60L772.94,273.87L771.77,275.13L770.60,276.40" fill="none" stroke="#52c569" stroke-width="1.389" stroke-dasharray="1.389 2.292"/>
<path d="M1066.0,163.8L1080.9,169.8" fill="none" stroke="#52c569" stroke-width="1.45"/>
<rect x="1079.8" y="168.7" width="2.2" height="2.2" fill="#ff6040"/>
<path d="M626.61,269.05L626.01,270.32L625.36,271.59L624.65,272.85L623.90,274.09L623.11,275.32L622.27,276.53L621.38,277.71L620.46,278.87L619.49,280.01L618.49,281.11L617.46,282.17L616.38,283.21L615.28,284.20L614.15,285.14L612.99,286.05L611.80,286.91L610.59,287.71L609.36,288.47L608.11,289.18L606.84,289.82L605.56,290.42L604.27,290.95L602.96,291.43L601.66,291.84L600.34,292.19L599.03,292.48L597.72,292.71L596.42,292.87L595.12,292.97L593.84,293.00L592.58,292.97L591.33,292.87L590.11,292.71L588.91,292.48L587.74,292.19L586.61,291.84L585.51,291.43L584.45,290.95L583.44,290.42L582.48,289.82L581.57,289.18L580.71,288.47L579.91,287.71L579.18,286.91L578.51,286.05L577.90,285.14L577.37,284.20L576.92,283.21L576.53,282.17L576.23,281.11L576.01,280.01L575.86,278.87L575.81,277.71L575.83,276.53L575.94,275.32L576.14,274.09L576.42,272.85L576.79,271.59L577.24,270.32L577.77,269.05L578.39,267.78L579.09,266.51L579.87,265.24L580.72,263.98L581.65,262.73L582.64,261.50L583.71,260.28L584.84,259.08L586.03,257.92L587.27,256.77L588.57,255.67L589.91,254.59L591.29,253.55L592.71,252.56L594.16,251.61L595.64,250.70L597.13,249.85L598.65,249.04L600.17,248.30L601.70,247.60L603.22,246.97L604.74,246.40L606.25,245.89L607.74,245.45L609.21,245.07L610.66,244.76L612.07,244.52L613.45,244.34L614.79,244.24L616.09,244.20L617.34,244.24L618.54,244.34L619.69,244.52L620.78,244.76L621.82,245.07L622.79,245.45L623.71,245.89L624.56,246.40L625.34,246.97L626.06,247.60L626.72,248.30L627.30,249.04L627.82,249.85L628.27,250.70L628.65,251.61L628.96,252.56L629.21,253.55L629.38,254.59L629.50,255.67L629.54,256.77L629.52,257.92L629.44,259.08L629.29,260.28L629.09,261.50L628.82,262.73L628.49,263.98L628.11,265.24L627.66,266.51L627.17,267.78Z" fill="none" stroke="#2ab07f" stroke-width="2.08"/>
<path d="M599.1,268.9H606.6999999999999M602.9,265.09999999999997V272.7" stroke="#f00" stroke-width="1.3" fill="none"/>
<text x="602.4" y="272.0" font-family="'DejaVu Sans','Liberation Sans',sans-serif" font-size="10.4" fill="#fff" text-anchor="middle">ORI</text>
<path d="M797.66,279.36L797.44,280.63L797.15,281.90L796.80,283.15L796.40,284.40L795.93,285.63L795.41,286.84L794.83,288.03L794.20,289.20L793.52,290.33L792.78,291.44L792.00,292.51L791.17,293.55L790.29,294.54L789.36,295.49L788.40,296.40L787.39,297.27L786.35,298.08L785.27,298.84L784.16,299.55L783.02,300.20L781.86,300.80L780.67,301.34L779.45,301.81L778.22,302.23L776.98,302.59L775.72,302.88L774.45,303.10L773.17,303.27L771.90,303.36L770.62,303.40L769.35,303.36L768.08,303.27L766.83,303.10L765.59,302.88L764.37,302.59L763.17,302.23L762.00,301.81L760.85,301.34L759.74,300.80L758.66,300.20L757.62,299.55L756.63,298.84L755.67,298.08L754.77,297.27L753.92,296.40L753.12,295.49L752.38,294.54L751.70,293.55L751.08,292.51L750.52,291.44L750.03,290.33L749.61,289.20L749.26,288.03L748.98,286.84L748.77,285.63L748.63,284.40L748.57,283.15L748.58,281.90L748.67,280.63L748.83,279.36L749.06,278.08L749.36,276.81L749.74,275.55L750.19,274.29L750.71,273.04L751.30,271.81L751.95,270.59L752.66,269.40L753.44,268.24L754.28,267.10L755.17,266.00L756.12,264.93L757.11,263.89L758.16,262.90L759.24,261.96L760.37,261.06L761.53,260.21L762.73,259.41L763.95,258.67L765.20,257.98L766.47,257.35L767.75,256.78L769.05,256.28L770.36,255.84L771.68,255.46L772.99,255.15L774.30,254.91L775.61,254.74L776.90,254.64L778.19,254.60L779.45,254.64L780.70,254.74L781.92,254.91L783.12,255.15L784.28,255.46L785.41,255.84L786.51,256.28L787.57,256.78L788.59,257.35L789.56,257.98L790.50,258.67L791.38,259.41L792.21,260.21L793.00,261.06L793.73,261.96L794.41,262.90L795.03,263.89L795.59,264.93L796.10,266.00L796.55,267.10L796.93,268.24L797.26,269.40L797.53,270.59L797.73,271.81L797.88,273.04L797.96,274.29L797.98,275.55L797.93,276.81L797.83,278.08Z" fill="none" stroke="#52c569" stroke-width="2.08"/>
<path d="M766.8000000000001,276.4H774.4M770.6,272.59999999999997V280.2" stroke="#f00" stroke-width="1.3" fill="none"/>
<text x="773.3" y="282.4" font-family="'DejaVu Sans','Liberation Sans',sans-serif" font-size="10.4" fill="#fff" text-anchor="middle">STA</text>
<g font-family="'DejaVu Sans','Liberation Sans',sans-serif" font-size="9.6" fill="#858585">
<text x="1473.09" y="330.10">+180<tspan dx="1.8" dy="-5.4" font-size="6.8">∘</tspan></text>
<text x="1374.63" y="330.10">+210<tspan dx="1.8" dy="-5.4" font-size="6.8">∘</tspan></text>
<text x="1276.97" y="330.10">+240<tspan dx="1.8" dy="-5.4" font-size="6.8">∘</tspan></text>
<text x="1179.31" y="330.10">+270<tspan dx="1.8" dy="-5.4" font-size="6.8">∘</tspan></text>
<text x="1081.64" y="330.10">+300<tspan dx="1.8" dy="-5.4" font-size="6.8">∘</tspan></text>
<text x="983.98" y="330.10">+330<tspan dx="1.8" dy="-5.4" font-size="6.8">∘</tspan></text>
<text x="892.42" y="330.10">+0<tspan dx="1.8" dy="-5.4" font-size="6.8">∘</tspan></text>
<text x="791.71" y="330.10">+30<tspan dx="1.8" dy="-5.4" font-size="6.8">∘</tspan></text>
<text x="694.05" y="330.10">+60<tspan dx="1.8" dy="-5.4" font-size="6.8">∘</tspan></text>
<text x="596.39" y="330.10">+90<tspan dx="1.8" dy="-5.4" font-size="6.8">∘</tspan></text>
<text x="495.67" y="330.10">+120<tspan dx="1.8" dy="-5.4" font-size="6.8">∘</tspan></text>
<text x="398.01" y="330.10">+150<tspan dx="1.8" dy="-5.4" font-size="6.8">∘</tspan></text>
<text x="300.35" y="330.10">+180<tspan dx="1.8" dy="-5.4" font-size="6.8">∘</tspan></text>
<text x="889.87" y="220.90">+30<tspan dx="1.8" dy="-5.4" font-size="6.8">∘</tspan></text>
<text x="889.87" y="122.90">+60<tspan dx="1.8" dy="-5.4" font-size="6.8">∘</tspan></text>
<text x="889.87" y="24.70">+90<tspan dx="1.8" dy="-5.4" font-size="6.8">∘</tspan></text>
<text x="889.87" y="428.00">−30<tspan dx="1.8" dy="-5.4" font-size="6.8">∘</tspan></text>
<text x="889.87" y="526.20">−60<tspan dx="1.8" dy="-5.4" font-size="6.8">∘</tspan></text>
<text x="889.87" y="623.80">−90<tspan dx="1.8" dy="-5.4" font-size="6.8">∘</tspan></text>
</g>
<g font-family="'DejaVu Sans Mono','Liberation Mono',monospace" font-size="13.935" fill="#fff" xml:space="preserve">
<text x="315.0" y="30.0">UK0062</text>
<text x="315.0" y="43.0">Beg: 20251021 18:09:19 (sol = 208.25°)</text>
<text x="315.0" y="57.0">End: 20251022 01:29:10 (sol = 208.55°)</text>
<text x="315.0" y="69.0">--------------------------------------</text>
<text x="315.0" y="82.0">...: 6</text>
<text x="315.0" y="95.0">ORI: 2</text>
<text x="315.0" y="108.0">STA: 1</text>
</g>
<clipPath id="axclip"><rect x="19.5" y="641.5" width="1766.0" height="201.0"/></clipPath>
<g clip-path="url(#axclip)">
<g font-family="'DejaVu Sans','Liberation Sans',sans-serif" font-size="27.78" fill="#555">
<text transform="translate(149.3,696.8) rotate(-90) scale(0.98,1)">APR</text>
<text transform="translate(293.8,702.5) rotate(-90) scale(0.98,1)">MAY</text>
<text transform="translate(436.0,689.0) rotate(-90) scale(0.98,1)">JUN</text>
<text transform="translate(575.8,683.3) rotate(-90) scale(0.98,1)">JUL</text>
<text transform="translate(723.3,701.5) rotate(-90) scale(0.98,1)">AUG</text>
<text transform="translate(872.0,695.3) rotate(-90) scale(0.98,1)">SEP</text>
<text transform="translate(1016.3,700.6) rotate(-90) scale(0.98,1)">OCT</text>
<text transform="translate(1169.1,705.2) rotate(-90) scale(0.98,1)">NOV</text>
<text transform="translate(1318.3,701.8) rotate(-90) scale(0.98,1)">DEC</text>
<text transform="translate(1469.1,686.6) rotate(-90) scale(0.98,1)">JAN</text>
<text transform="translate(1627.8,697.3) rotate(-90) scale(0.98,1)">FEB</text>
<text transform="translate(1766.2,706.5) rotate(-90) scale(0.98,1)">MAR</text>
</g>
<path d="M1042.05,842.5V641.5" stroke="#f00" stroke-width="2.05" stroke-dasharray="5.14 2.22" fill="none"/>
<g fill="#c2df23">
<rect x="106" y="831.8" width="23.2" height="4.2"/>
<rect x="165" y="831.8" width="180.0" height="4.2"/>
<rect x="366" y="831.8" width="259.0" height="4.2"/>
<rect x="635" y="831.8" width="151.0" height="4.2"/>
<rect x="807" y="831.8" width="92.0" height="4.2"/>
<rect x="920" y="831.8" width="53.0" height="4.2"/>
<rect x="984" y="831.8" width="82.0" height="4.2"/>
<rect x="1082" y="831.8" width="121.0" height="4.2"/>
<rect x="1244" y="831.8" width="82.0" height="4.2"/>
<rect x="1337" y="831.8" width="18.0" height="4.2"/>
<rect x="1381" y="831.8" width="63.0" height="4.2"/>
<rect x="1459" y="831.8" width="53.0" height="4.2"/>
<rect x="1523" y="831.8" width="24.0" height="4.2"/>
<rect x="1724" y="831.8" width="24.0" height="4.2"/>
<rect x="1758" y="831.8" width="24.0" height="4.2"/>
</g>
<g fill="#86d549">
<rect x="165" y="815.9" width="23.0" height="4.2"/>
<rect x="223" y="815.9" width="63.0" height="4.2"/>
<rect x="312" y="815.9" width="28.0" height="4.2"/>
<rect x="366" y="815.9" width="126.0" height="4.2"/>
<rect x="508" y="815.9" width="146.0" height="4.2"/>
<rect x="704" y="815.9" width="33.0" height="4.2"/>
<rect x="773" y="815.9" width="72.0" height="4.2"/>
<rect x="871" y="815.9" width="117.0" height="4.2"/>
<rect x="1003" y="815.9" width="14.0" height="4.2"/>
<rect x="1062" y="815.9" width="151.0" height="4.2"/>
<rect x="1244" y="815.9" width="23.0" height="4.2"/>
<rect x="1293" y="815.9" width="23.0" height="4.2"/>
<rect x="1342" y="815.9" width="23.0" height="4.2"/>
<rect x="1386" y="815.9" width="43.0" height="4.2"/>
<rect x="1459" y="815.9" width="24.0" height="4.2"/>
<rect x="1548" y="815.9" width="23.0" height="4.2"/>
</g>
<g fill="#52c569">
<rect x="165" y="799.8" width="23.0" height="4.2"/>
<rect x="258" y="799.8" width="229.0" height="4.2"/>
<rect x="508" y="799.8" width="107.0" height="4.2"/>
<rect x="626" y="799.8" width="92.0" height="4.2"/>
<rect x="729" y="799.8" width="97.0" height="4.2"/>
<rect x="949" y="799.8" width="200.0" height="4.2"/>
<rect x="1160" y="799.8" width="88.0" height="4.2"/>
<rect x="1258" y="799.8" width="186.0" height="4.2"/>
<rect x="1459" y="799.8" width="24.0" height="4.2"/>
<rect x="1552" y="799.8" width="24.0" height="4.2"/>
</g>
<g fill="#2ab07f">
<rect x="193.8" y="782.9" width="24.2" height="4.2"/>
<rect x="321" y="782.9" width="186.0" height="4.2"/>
<rect x="518" y="782.9" width="23.0" height="4.2"/>
<rect x="557" y="782.9" width="126.0" height="4.2"/>
<rect x="807" y="782.9" width="24.0" height="4.2"/>
<rect x="954" y="782.9" width="19.0" height="4.2"/>
<rect x="988" y="782.9" width="137.0" height="4.2"/>
<rect x="1155" y="782.9" width="63.0" height="4.2"/>
<rect x="1244" y="782.9" width="23.0" height="4.2"/>
<rect x="1317" y="782.9" width="24.0" height="4.2"/>
<rect x="1396" y="782.9" width="23.0" height="4.2"/>
<rect x="1464" y="782.9" width="186.0" height="4.2"/>
</g>
<g fill="#1e9b8a">
<rect x="341" y="766.8" width="29.0" height="4.2"/>
<rect x="410" y="766.8" width="38.0" height="4.2"/>
<rect x="469" y="766.8" width="23.0" height="4.2"/>
<rect x="527" y="766.8" width="19.0" height="4.2"/>
<rect x="562" y="766.8" width="28.0" height="4.2"/>
<rect x="616" y="766.8" width="33.0" height="4.2"/>
<rect x="959" y="766.8" width="29.0" height="4.2"/>
<rect x="1062" y="766.8" width="24.0" height="4.2"/>
<rect x="1101" y="766.8" width="24.0" height="4.2"/>
<rect x="1160" y="766.8" width="34.0" height="4.2"/>
<rect x="1248" y="766.8" width="24.0" height="4.2"/>
<rect x="1425" y="766.8" width="87.0" height="4.2"/>
</g>
<g fill="#25858e">
<rect x="420" y="749.8" width="23.0" height="4.2"/>
<rect x="532" y="749.8" width="24.0" height="4.2"/>
<rect x="567" y="749.8" width="23.0" height="4.2"/>
<rect x="621" y="749.8" width="121.0" height="4.2"/>
<rect x="969" y="749.8" width="166.0" height="4.2"/>
<rect x="1185" y="749.8" width="161.0" height="4.2"/>
<rect x="1469" y="749.8" width="24.0" height="4.2"/>
</g>
<g fill="#2d708e">
<rect x="429" y="733.8" width="24.0" height="4.2"/>
<rect x="576" y="733.8" width="157.0" height="4.2"/>
<rect x="993" y="733.8" width="112.0" height="4.2"/>
<rect x="1116" y="733.8" width="107.0" height="4.2"/>
<rect x="1263" y="733.8" width="29.0" height="4.2"/>
<rect x="1489" y="733.8" width="23.0" height="4.2"/>
</g>
<g fill="#38588c">
<rect x="591" y="717.9" width="24.0" height="4.2"/>
<rect x="655" y="717.9" width="117.0" height="4.2"/>
<rect x="1072" y="717.9" width="171.0" height="4.2"/>
<rect x="1263" y="717.9" width="24.0" height="4.2"/>
</g>
<g fill="#433e85">
<rect x="596" y="700.9" width="137.0" height="4.2"/>
<rect x="1091" y="700.9" width="29.0" height="4.2"/>
<rect x="1199" y="700.9" width="24.0" height="4.2"/>
<rect x="1273" y="700.9" width="53.0" height="4.2"/>
</g>
<g fill="#482173">
<rect x="1111" y="684.9" width="24.0" height="4.2"/>
</g>
<g fill="none" stroke="#fff" stroke-opacity="0.41" stroke-width="2.083" stroke-dasharray="2.083 3.438">
<path d="M73.8,841.9V641.5"/>
<path d="M218.0,841.9V641.5"/>
<path d="M365.0,841.9V641.5"/>
<path d="M505.0,841.9V641.5"/>
<path d="M650.0,841.9V641.5"/>
<path d="M797.0,841.9V641.5"/>
<path d="M940.0,841.9V641.5"/>
<path d="M1091.0,841.9V641.5"/>
<path d="M1239.0,841.9V641.5"/>
<path d="M1394.0,841.9V641.5"/>
<path d="M1548.0,841.9V641.5"/>
<path d="M1687.0,841.9V641.5"/>
</g>
<path d="M112.9,834.1h8.2M117.0,830.0v8.2M240.4,834.1h8.2M244.5,830.0v8.2M510.9,834.1h8.2M515.0,830.0v8.2M706.7,834.1h8.2M710.8,830.0v8.2M832.6,834.1h8.2M836.7,830.0v8.2M961.9,834.1h8.2M966.0,830.0v8.2M985.6,834.1h8.2M989.7,830.0v8.2M1115.7,834.1h8.2M1119.8,830.0v8.2M1294.7,834.1h8.2M1298.8,830.0v8.2M1341.7,834.1h8.2M1345.8,830.0v8.2M1412.6,834.1h8.2M1416.7,830.0v8.2M1481.7,834.1h8.2M1485.8,830.0v8.2M1530.6,834.1h8.2M1534.7,830.0v8.2M1731.7,834.1h8.2M1735.8,830.0v8.2M1765.9,834.1h8.2M1770.0,830.0v8.2M171.7,818.2h8.2M175.8,814.1v8.2M255.9,818.2h8.2M260.0,814.1v8.2M322.9,818.2h8.2M327.0,814.1v8.2M436.7,818.2h8.2M440.8,814.1v8.2M598.9,818.2h8.2M603.0,814.1v8.2M716.7,818.2h8.2M720.8,814.1v8.2M792.6,818.2h8.2M796.7,814.1v8.2M938.7,818.2h8.2M942.8,814.1v8.2M1005.7,818.2h8.2M1009.8,814.1v8.2M1152.7,818.2h8.2M1156.8,814.1v8.2M1250.7,818.2h8.2M1254.8,814.1v8.2M1299.7,818.2h8.2M1303.8,814.1v8.2M1348.7,818.2h8.2M1352.8,814.1v8.2M1402.6,818.2h8.2M1406.7,814.1v8.2M1466.7,818.2h8.2M1470.8,814.1v8.2M1554.7,818.2h8.2M1558.8,814.1v8.2M173.7,802.1h8.2M177.8,798.0v8.2M377.6,802.1h8.2M381.7,798.0v8.2M544.7,802.1h8.2M548.8,798.0v8.2M681.7,802.1h8.2M685.8,798.0v8.2M740.6,802.1h8.2M744.7,798.0v8.2M1074.6,802.1h8.2M1078.7,798.0v8.2M1216.7,802.1h8.2M1220.8,798.0v8.2M1304.6,802.1h8.2M1308.7,798.0v8.2M1466.7,802.1h8.2M1470.8,798.0v8.2M1559.7,802.1h8.2M1563.8,798.0v8.2M201.7,785.2h8.2M205.8,781.1v8.2M399.6,785.2h8.2M403.7,781.1v8.2M524.7,785.2h8.2M528.8,781.1v8.2M638.7,785.2h8.2M642.8,781.1v8.2M814.7,785.2h8.2M818.8,781.1v8.2M958.7,785.2h8.2M962.8,781.1v8.2M1039.6,785.2h8.2M1043.7,781.1v8.2M1187.6,785.2h8.2M1191.7,781.1v8.2M1250.7,785.2h8.2M1254.8,781.1v8.2M1324.7,785.2h8.2M1328.8,781.1v8.2M1402.7,785.2h8.2M1406.8,781.1v8.2M1545.6,785.2h8.2M1549.7,781.1v8.2M355.9,769.1h8.2M360.0,765.0v8.2M425.9,769.1h8.2M430.0,765.0v8.2M475.6,769.1h8.2M479.7,765.0v8.2M534.7,769.1h8.2M538.8,765.0v8.2M570.9,769.1h8.2M575.0,765.0v8.2M630.6,769.1h8.2M634.7,765.0v8.2M973.7,769.1h8.2M977.8,765.0v8.2M1069.6,769.1h8.2M1073.7,765.0v8.2M1108.7,769.1h8.2M1112.8,765.0v8.2M1177.6,769.1h8.2M1181.7,765.0v8.2M1255.6,769.1h8.2M1259.7,765.0v8.2M1466.7,769.1h8.2M1470.8,765.0v8.2M426.7,752.1h8.2M430.8,748.0v8.2M539.7,752.1h8.2M543.8,748.0v8.2M573.7,752.1h8.2M577.8,748.0v8.2M703.7,752.1h8.2M707.8,748.0v8.2M1093.6,752.1h8.2M1097.7,748.0v8.2M1270.9,752.1h8.2M1275.0,748.0v8.2M1476.7,752.1h8.2M1480.8,748.0v8.2M436.7,736.1h8.2M440.8,732.0v8.2M630.9,736.1h8.2M635.0,732.0v8.2M1038.7,736.1h8.2M1042.8,732.0v8.2M1167.9,736.1h8.2M1172.0,732.0v8.2M1274.7,736.1h8.2M1278.8,732.0v8.2M1496.7,736.1h8.2M1500.8,732.0v8.2M598.7,720.2h8.2M602.8,716.1v8.2M726.7,720.2h8.2M730.8,716.1v8.2M1187.6,720.2h8.2M1191.7,716.1v8.2M1270.9,720.2h8.2M1275.0,716.1v8.2M686.9,703.2h8.2M691.0,699.1v8.2M1101.9,703.2h8.2M1106.0,699.1v8.2M1206.7,703.2h8.2M1210.8,699.1v8.2M1299.7,703.2h8.2M1303.8,699.1v8.2M1118.7,687.2h8.2M1122.8,683.1v8.2" stroke="#fff" stroke-width="2.08" fill="none"/>
<g font-family="'DejaVu Sans','Liberation Sans',sans-serif" font-size="10.4" fill="#fff" text-anchor="middle">
<text x="117.0" y="831.8">KSE</text>
<text x="254.4" y="831.8">ETA</text>
<text x="494.7" y="831.8">NZC</text>
<text x="710.6" y="831.8">NDA</text>
<text x="852.9" y="831.8">SPE</text>
<text x="946.1" y="831.8">ARD</text>
<text x="1024.5" y="831.8">EGE</text>
<text x="1142.3" y="831.8">NTA</text>
<text x="1284.5" y="831.8">MON</text>
<text x="1343.4" y="831.8">URS</text>
<text x="1412.1" y="831.8">AHY</text>
<text x="1485.7" y="831.8">GUM</text>
<text x="1534.7" y="831.8">OHY</text>
<text x="1735.9" y="831.8">XHE</text>
<text x="1770.2" y="831.8">EVI</text>
<text x="175.9" y="814.8">AVB</text>
<text x="254.4" y="814.8">ELY</text>
<text x="323.0" y="814.8">CAM</text>
<text x="431.0" y="814.8">SSG</text>
<text x="578.1" y="814.8">PCA</text>
<text x="720.4" y="814.8">AUD</text>
<text x="808.7" y="814.8">AUR</text>
<text x="931.3" y="814.8">DSX</text>
<text x="1009.8" y="814.8">OCU</text>
<text x="1137.4" y="814.8">OER</text>
<text x="1255.1" y="814.8">DKD</text>
<text x="1304.2" y="814.8">DSV</text>
<text x="1353.2" y="814.8">ALY</text>
<text x="1407.2" y="814.8">JLE</text>
<text x="1471.0" y="814.8">SCC</text>
<text x="1559.3" y="814.8">FEV</text>
<text x="175.9" y="798.9">LYR</text>
<text x="372.1" y="798.9">JMC</text>
<text x="558.5" y="798.9">JPE</text>
<text x="671.3" y="798.9">PAU</text>
<text x="774.4" y="798.9">NIA</text>
<text x="1049.1" y="798.9">STA</text>
<text x="1206.1" y="798.9">NOO</text>
<text x="1353.2" y="798.9">COM</text>
<text x="1471.0" y="798.9">NCC</text>
<text x="1564.2" y="798.9">FED</text>
<text x="205.3" y="782.8">HVI</text>
<text x="411.3" y="782.8">ARI</text>
<text x="529.1" y="782.8">SZC</text>
<text x="617.4" y="782.8">CAP</text>
<text x="818.5" y="782.8">NUE</text>
<text x="960.8" y="782.8">OCT</text>
<text x="1058.9" y="782.8">ORI</text>
<text x="1186.4" y="782.8">AMO</text>
<text x="1255.1" y="782.8">DPC</text>
<text x="1328.7" y="782.8">XVI</text>
<text x="1407.2" y="782.8">QUA</text>
<text x="1559.3" y="782.8">AAN</text>
<text x="352.5" y="765.8">TAH</text>
<text x="431.0" y="765.8">JEA</text>
<text x="480.0" y="765.8">JIP</text>
<text x="538.9" y="765.8">PPS</text>
<text x="578.1" y="765.8">ZCS</text>
<text x="632.1" y="765.8">GDR</text>
<text x="970.6" y="765.8">DRA</text>
<text x="1073.6" y="765.8">LUM</text>
<text x="1112.8" y="765.8">RPU</text>
<text x="1176.6" y="765.8">THA</text>
<text x="1260.0" y="765.8">PSU</text>
<text x="1471.0" y="765.8">XCB</text>
<text x="431.0" y="749.8">JRC</text>
<text x="543.8" y="749.8">CAN</text>
<text x="578.1" y="749.8">FAN</text>
<text x="681.2" y="749.8">PER</text>
<text x="1049.1" y="749.8">CTA</text>
<text x="1264.9" y="749.8">HYD</text>
<text x="1480.8" y="749.8">XUM</text>
<text x="440.8" y="732.8">COR</text>
<text x="656.6" y="732.8">SDA</text>
<text x="1049.1" y="732.8">LMI</text>
<text x="1166.8" y="732.8">LEO</text>
<text x="1274.7" y="732.8">EHY</text>
<text x="1500.4" y="732.8">ECV</text>
<text x="602.7" y="716.9">JXA</text>
<text x="715.5" y="716.9">KCG</text>
<text x="1157.0" y="716.9">AND</text>
<text x="1274.7" y="716.9">DAD</text>
<text x="666.4" y="700.8">ERI</text>
<text x="1107.9" y="700.8">SLD</text>
<text x="1211.0" y="700.8">ORS</text>
<text x="1299.3" y="700.8">GEM</text>
<text x="1122.7" y="683.8">KUM</text>
</g>
</g>
<rect x="19.5" y="641.5" width="1766.0" height="201.0" fill="none" stroke="#fff" stroke-width="1.1"/>
<g font-family="'DejaVu Sans','Liberation Sans',sans-serif" font-size="13.889" fill="#fff" text-anchor="middle">
<text x="20.1" y="861.7">0</text>
<text x="264.4" y="861.7">50</text>
<text x="509.7" y="861.7">100</text>
<text x="754.9" y="861.7">150</text>
<text x="1000.2" y="861.7">200</text>
<text x="1245.5" y="861.7">250</text>
<text x="1490.8" y="861.7">300</text>
<text x="1736.1" y="861.7">350</text>
<path d="M19.5,842.5v5.2M265.5,842.5v5.2M510.5,842.5v5.2M755.5,842.5v5.2M1000.5,842.5v5.2M1246.5,842.5v5.2M1491.5,842.5v5.2M1736.5,842.5v5.2" stroke="#fff" stroke-width="1.1" fill="none"/>
<text x="902.6" y="881.6">Solar longitude (deg)</text>
</g>
</svg>
</body></html>
